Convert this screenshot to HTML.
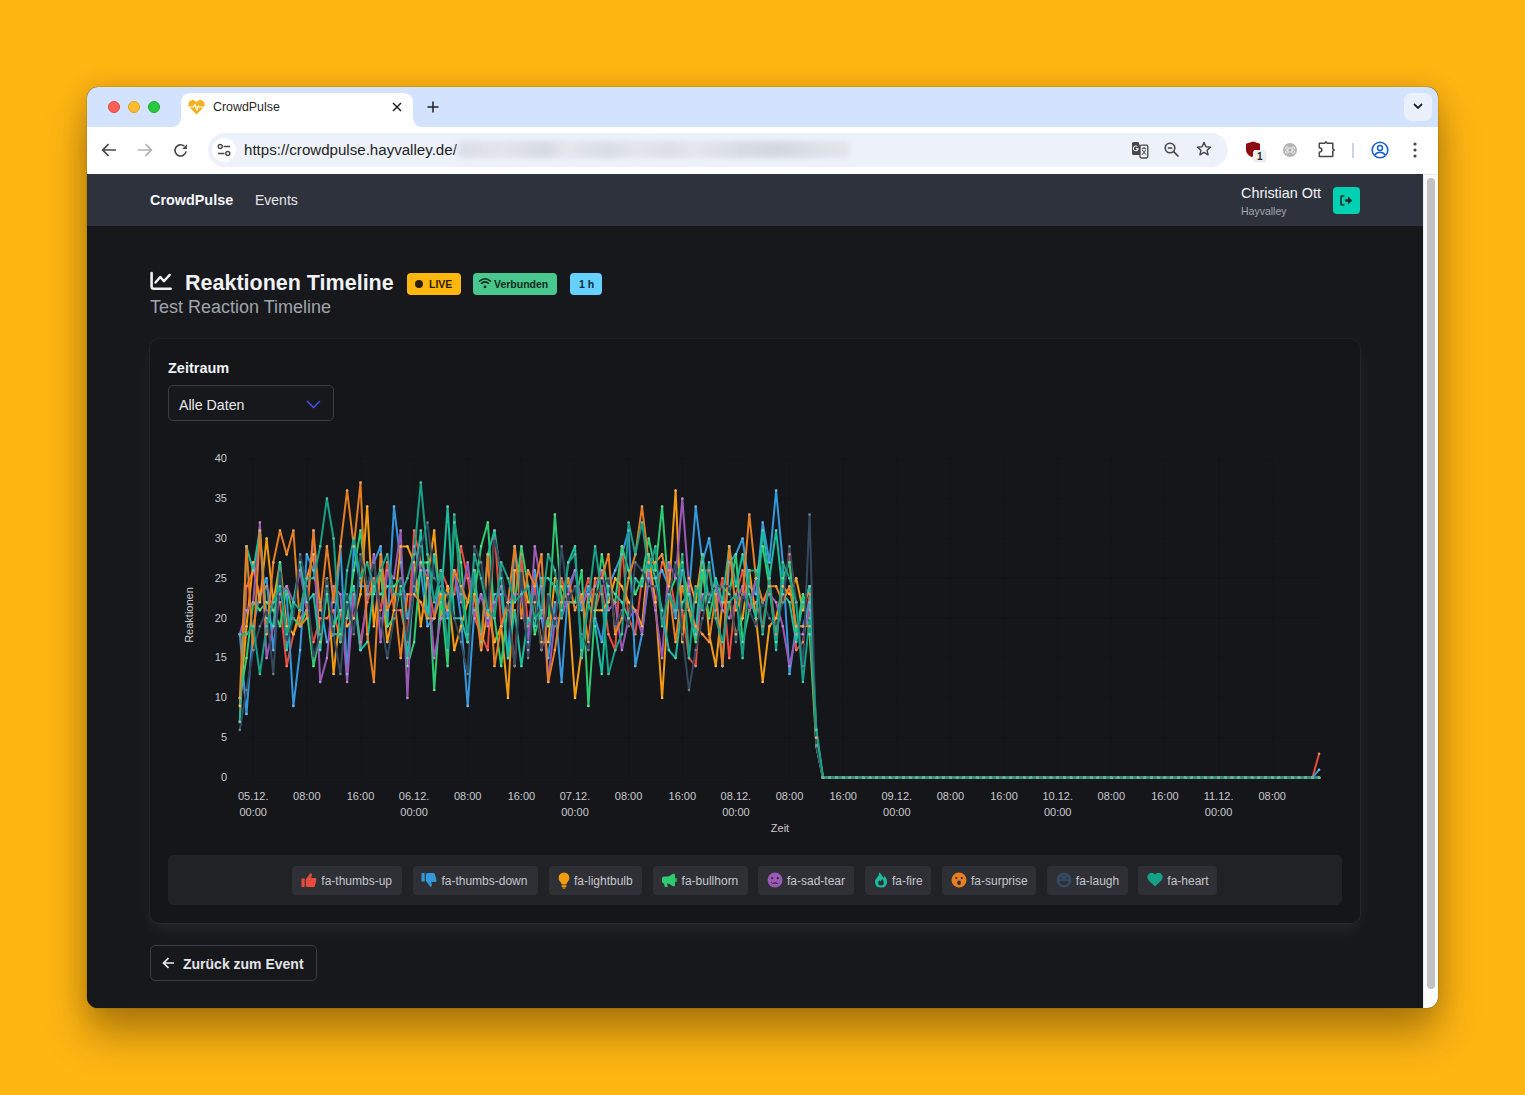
<!DOCTYPE html>
<html><head><meta charset="utf-8">
<style>
*{box-sizing:border-box;margin:0;padding:0}
html,body{width:1525px;height:1095px;overflow:hidden}
body{background:#feb613;position:relative;font-family:"Liberation Sans",sans-serif}
.abs{position:absolute}
.win{position:absolute;left:87px;top:87px;width:1351px;height:921px;border-radius:11px;overflow:hidden;background:#17181c;
 box-shadow:0 0 0 0.5px rgba(120,80,0,0.35),0 26px 40px rgba(60,35,0,0.40),0 0 24px rgba(60,35,0,0.15)}
.tabbar{position:absolute;left:0;top:0;width:1351px;height:40px;background:#d3e3fd}
.toolbar{position:absolute;left:0;top:40px;width:1351px;height:47px;background:#fff}
.page{position:absolute;left:0;top:87px;width:1336px;height:834px;background:#17181c}
.sbar{position:absolute;left:1336px;top:87px;width:15px;height:834px;background:#fafafa;border-left:1px solid #ececec;border-top:1px solid #e8e8e8}
.thumb{position:absolute;left:3px;top:3px;width:8px;height:811px;border-radius:4px;background:#c2c2c2}
.navbar{position:absolute;left:0;top:0;width:1336px;height:52px;background:#2e323c}
svg{display:block}
</style></head><body>
<div class="win">
  <div class="tabbar">
    <div class="abs" style="left:21px;top:14px;width:12px;height:12px;border-radius:50%;background:#ff5f57;border:0.5px solid #e2463f"></div>
    <div class="abs" style="left:41px;top:14px;width:12px;height:12px;border-radius:50%;background:#febc2e;border:0.5px solid #e1a116"></div>
    <div class="abs" style="left:61px;top:14px;width:12px;height:12px;border-radius:50%;background:#28c840;border:0.5px solid #14ae2a"></div>
    <!-- active tab -->
    <svg class="abs" style="left:84px;top:6px" width="252" height="34" viewBox="0 0 252 34">
      <path d="M0 34 Q10 34 10 24 L10 10 Q10 0 20 0 L232 0 Q242 0 242 10 L242 24 Q242 34 252 34 Z" fill="#fff"/>
    </svg>
    <svg class="abs" style="left:101px;top:12px" width="17" height="16" viewBox="0 0 17 16">
      <path d="M8.5 15.5 L1.6 8.6 C-0.6 6.4 0.2 1.2 4.4 1.0 C6.3 0.9 7.6 2.0 8.5 3.3 C9.4 2.0 10.7 0.9 12.6 1.0 C16.8 1.2 17.6 6.4 15.4 8.6 Z" fill="#f6b01e"/>
      <path d="M1 8 L5.5 8 L7 5.5 L8.8 11 L10.3 7 L11.3 8 L16 8" fill="none" stroke="#fff" stroke-width="1.2" stroke-linejoin="round"/>
    </svg>
    <div class="abs" style="left:126px;top:13px;font-size:12.4px;color:#1f1f1f;line-height:14px">CrowdPulse</div>
    <svg class="abs" style="left:305px;top:15px" width="10" height="10" viewBox="0 0 10 10"><path d="M1 1L9 9M9 1L1 9" stroke="#1f1f1f" stroke-width="1.5"/></svg>
    <svg class="abs" style="left:340px;top:14px" width="12" height="12" viewBox="0 0 12 12"><path d="M6 0.5V11.5M0.5 6H11.5" stroke="#1f1f1f" stroke-width="1.5"/></svg>
    <div class="abs" style="left:1317px;top:6px;width:28px;height:28px;border-radius:8px;background:#ebf1fc"></div>
    <svg class="abs" style="left:1326px;top:16px" width="10" height="7" viewBox="0 0 10 7"><path d="M1 1L5 5L9 1" fill="none" stroke="#1f1f1f" stroke-width="1.8"/></svg>
  </div>
  <div class="toolbar">
    <svg class="abs" style="left:14px;top:16px" width="16" height="14" viewBox="0 0 16 14"><path d="M15 7H2M7.5 1.2L1.7 7L7.5 12.8" fill="none" stroke="#474747" stroke-width="1.7"/></svg>
    <svg class="abs" style="left:50px;top:16px" width="16" height="14" viewBox="0 0 16 14"><path d="M1 7H14M8.5 1.2L14.3 7L8.5 12.8" fill="none" stroke="#b1b1b1" stroke-width="1.7"/></svg>
    <svg class="abs" style="left:86px;top:16px" width="16" height="16" viewBox="0 0 16 16"><path d="M13.1 8.4A5.6 5.6 0 1 1 11.3 3.2" fill="none" stroke="#474747" stroke-width="1.6"/><path d="M13.9 1.2V5.9H9.2Z" fill="#474747"/></svg>
    <div class="abs" style="left:121px;top:6px;width:1020px;height:34px;border-radius:17px;background:#edf1f9"></div>
    <div class="abs" style="left:125px;top:11px;width:24px;height:24px;border-radius:12px;background:#fff"></div>
    <svg class="abs" style="left:130px;top:16px" width="14" height="14" viewBox="0 0 14 14">
      <circle cx="3.2" cy="3.5" r="2" fill="none" stroke="#474747" stroke-width="1.4"/><path d="M6.5 3.5H13" stroke="#474747" stroke-width="1.4"/>
      <circle cx="10.8" cy="10.5" r="2" fill="none" stroke="#474747" stroke-width="1.4"/><path d="M1 10.5H7.5" stroke="#474747" stroke-width="1.4"/>
    </svg>
    <div class="abs" style="left:157px;top:14px;font-size:15.1px;color:#1f1f1f;line-height:18px">https://crowdpulse.hayvalley.de/</div>
    <div class="abs" style="left:371px;top:14px;width:392px;height:17px;border-radius:6px;background:linear-gradient(90deg,#dadee6 0%,#e2e5ec 12%,#d6dae2 22%,#e4e7ee 28%,#d9dde5 38%,#e3e6ed 46%,#dcdfe7 54%,#e4e7ee 60%,#d8dce4 72%,#d4d8e0 82%,#dde1e8 92%,#e3e6ed 100%);filter:blur(2.5px)"></div>
    <!-- right omnibox icons -->
    <svg class="abs" style="left:1044px;top:14px" width="18" height="18" viewBox="0 0 18 18">
      <path d="M1 2.5Q1 1 2.5 1H7.5L8.6 4.2H9V14H2.5Q1 14 1 12.5Z" fill="#474747"/>
      <rect x="9" y="4.2" width="7.8" height="12.8" rx="1.5" fill="#edf1f9" stroke="#474747" stroke-width="1.3"/>
      <path d="M7.2 7.4A2.4 2.4 0 1 1 6.4 5.6M4.9 7.6H7.3" fill="none" stroke="#edf1f9" stroke-width="1.1"/>
      <path d="M10.8 7.3H15.2M13 6.2V7.3M11.3 8.6Q12.6 12.5 15.3 13.5M14.6 8.6Q13.6 12.3 10.8 13.5" fill="none" stroke="#474747" stroke-width="1"/>
    </svg>
    <svg class="abs" style="left:1077px;top:55px" width="1" height="1"></svg>
    <svg class="abs" style="left:1077px;top:55px" width="1" height="1"></svg>
    <svg class="abs" style="left:1077px;top:15px" width="16" height="16" viewBox="0 0 16 16"><circle cx="6" cy="6" r="4.8" fill="none" stroke="#474747" stroke-width="1.6"/><path d="M3.8 6H8.2M9.6 9.6L14.5 14.5" stroke="#474747" stroke-width="1.7"/></svg>
    <svg class="abs" style="left:1109px;top:14px" width="16" height="16" viewBox="0 0 16 16"><path d="M8 1.4L9.9 5.7L14.6 6.1L11 9.2L12.1 13.8L8 11.4L3.9 13.8L5 9.2L1.4 6.1L6.1 5.7Z" fill="none" stroke="#474747" stroke-width="1.4" stroke-linejoin="round"/></svg>
    <svg class="abs" style="left:1159px;top:14px" width="24" height="24" viewBox="0 0 24 24"><path d="M0 2.8L7 0.6L14 2.8V9H8V14.5Q6.5 15.5 5.5 16Q0 13 0 9Z" fill="#8d0a0e"/><rect x="7" y="9" width="13.5" height="12.5" rx="3" fill="#ededed"/><text x="13.8" y="19" font-size="10" font-weight="bold" text-anchor="middle" fill="#2a2a2a" font-family="Liberation Sans">1</text></svg>
    <div class="abs" style="left:1196px;top:56px"></div>
    <svg class="abs" style="left:1196px;top:16px" width="14" height="14" viewBox="0 0 14 14"><circle cx="7" cy="7" r="7" fill="#b4b4b4"/><path d="M5 5H9V9H5ZM5 5A1.3 1.3 0 1 0 3.7 6.3H5M9 5A1.3 1.3 0 1 1 10.3 6.3H9M5 9A1.3 1.3 0 1 1 3.7 7.7H5M9 9A1.3 1.3 0 1 0 10.3 7.7H9" fill="none" stroke="#eee" stroke-width="0.9"/></svg>
    <svg class="abs" style="left:1231px;top:14px" width="18" height="18" viewBox="0 0 18 18"><path d="M1.3 2.2H6.6L7.9 0.9L9.2 2.2H14.8V7.8L16.3 9L14.8 10.2V15.6H1.3V11.2Q3.9 10.8 3.9 9Q3.9 7.2 1.3 6.8Z" fill="none" stroke="#474747" stroke-width="1.5" stroke-linejoin="round"/></svg>
    <div class="abs" style="left:1265px;top:16px;width:2px;height:15px;background:#c9d5ea"></div>
    <svg class="abs" style="left:1284px;top:14px" width="18" height="18" viewBox="0 0 18 18"><circle cx="9" cy="9" r="7.8" fill="none" stroke="#1b5fcf" stroke-width="1.6"/><circle cx="9" cy="7" r="2.5" fill="none" stroke="#1b5fcf" stroke-width="1.5"/><path d="M3.8 14.2Q5.5 11.3 9 11.3Q12.5 11.3 14.2 14.2" fill="none" stroke="#1b5fcf" stroke-width="1.5"/></svg>
    <svg class="abs" style="left:1326px;top:15px" width="4" height="16" viewBox="0 0 4 16"><circle cx="2" cy="2" r="1.6" fill="#474747"/><circle cx="2" cy="8" r="1.6" fill="#474747"/><circle cx="2" cy="14" r="1.6" fill="#474747"/></svg>
  </div>
  <div class="page">
    <div class="navbar">
      <div class="abs" style="left:63px;top:18px;font-size:14.4px;font-weight:bold;color:#f4f5f7;line-height:16px">CrowdPulse</div>
      <div class="abs" style="left:168px;top:18px;font-size:14px;color:#e4e6ea;line-height:16px">Events</div>
      <div class="abs" style="left:1154px;top:11px;font-size:14.4px;color:#f2f3f5;line-height:16px">Christian Ott</div>
      <div class="abs" style="left:1154px;top:31px;font-size:10.5px;color:#a3a7af;line-height:12px">Hayvalley</div>
      <div class="abs" style="left:1246px;top:13px;width:27px;height:27px;border-radius:4px;background:#00d1b2"></div>
      <svg class="abs" style="left:1253px;top:21px" width="13" height="11" viewBox="0 0 13 11"><path d="M4.5 1H2Q1 1 1 2V9Q1 10 2 10H4.5" fill="none" stroke="#10302a" stroke-width="1.6"/><path d="M5 4.2H8V1.5L12.3 5.5L8 9.5V6.8H5Z" fill="#10302a"/></svg>
    </div>
  </div>
  <div class="sbar"><div class="thumb"></div></div>
</div>

<!-- page content in absolute body coords -->
<svg class="abs" style="left:150px;top:270px" width="24" height="22" viewBox="0 0 24 22"><path d="M1.6 3V16.6Q1.6 18.8 3.8 18.8H20.7" fill="none" stroke="#eef0f3" stroke-width="2.6" stroke-linecap="round"/><path d="M5.5 12.5L10.3 7L13.9 11.2L19.7 4.9" fill="none" stroke="#eef0f3" stroke-width="2.4" stroke-linecap="round" stroke-linejoin="round"/></svg>
<div class="abs" style="left:185px;top:271px;font-size:21.5px;font-weight:bold;color:#f0f1f4;line-height:24px">Reaktionen Timeline</div>
<div class="abs" style="left:407px;top:273px;width:54px;height:22px;border-radius:4px;background:#ffb70f"></div>
<div class="abs" style="left:415px;top:280px;width:8px;height:8px;border-radius:50%;background:#2a1f05"></div>
<div class="abs" style="left:429px;top:278px;font-size:10.5px;font-weight:bold;color:#2a1f05;line-height:12px">LIVE</div>
<div class="abs" style="left:473px;top:273px;width:84px;height:22px;border-radius:4px;background:#48c78e"></div>
<svg class="abs" style="left:478px;top:277px" width="14" height="12" viewBox="0 0 14 12"><path d="M1 4.5Q7 -1 13 4.5M3 6.8Q7 3 11 6.8" fill="none" stroke="#0d2a1c" stroke-width="1.5"/><circle cx="7" cy="9.8" r="1.4" fill="#0d2a1c"/></svg>
<div class="abs" style="left:494px;top:278px;font-size:10.5px;font-weight:bold;color:#0d2a1c;line-height:12px">Verbunden</div>
<div class="abs" style="left:570px;top:273px;width:32px;height:22px;border-radius:4px;background:#66d1ff"></div>
<div class="abs" style="left:579px;top:278px;font-size:10.5px;font-weight:bold;color:#0a2a3a;line-height:12px">1 h</div>
<div class="abs" style="left:150px;top:297px;font-size:18px;color:#a0a4ab;line-height:20px">Test Reaction Timeline</div>

<!-- card -->
<div class="abs" style="left:150px;top:339px;width:1210px;height:584px;border-radius:9px;background:#15161a;box-shadow:0 0 0 1px rgba(255,255,255,0.04),0 8px 16px -2px rgba(255,255,255,0.07)"></div>
<div class="abs" style="left:168px;top:360px;font-size:14.5px;font-weight:bold;color:#f0f1f4;line-height:16px">Zeitraum</div>
<div class="abs" style="left:168px;top:385px;width:166px;height:36px;border-radius:5px;border:1px solid #3a3d45;background:#17181c"></div>
<div class="abs" style="left:179px;top:397px;font-size:14.2px;color:#e8e9ec;line-height:16px">Alle Daten</div>
<svg class="abs" style="left:306px;top:400px" width="15" height="9" viewBox="0 0 15 9"><path d="M1 1L7.5 7.5L14 1" fill="none" stroke="#4258ff" stroke-width="1.3"/></svg>

<svg class="abs" style="left:0;top:0" width="1525" height="1095" viewBox="0 0 1525 1095">
<g stroke="rgba(0,0,0,0.07)" stroke-width="1"><line x1="238" y1="777.7" x2="1320" y2="777.7"/><line x1="238" y1="737.8" x2="1320" y2="737.8"/><line x1="238" y1="698.0" x2="1320" y2="698.0"/><line x1="238" y1="658.1" x2="1320" y2="658.1"/><line x1="238" y1="618.2" x2="1320" y2="618.2"/><line x1="238" y1="578.3" x2="1320" y2="578.3"/><line x1="238" y1="538.5" x2="1320" y2="538.5"/><line x1="238" y1="498.6" x2="1320" y2="498.6"/><line x1="238" y1="458.7" x2="1320" y2="458.7"/><line x1="253.2" y1="458" x2="253.2" y2="777"/><line x1="306.8" y1="458" x2="306.8" y2="777"/><line x1="360.5" y1="458" x2="360.5" y2="777"/><line x1="414.1" y1="458" x2="414.1" y2="777"/><line x1="467.7" y1="458" x2="467.7" y2="777"/><line x1="521.4" y1="458" x2="521.4" y2="777"/><line x1="575.0" y1="458" x2="575.0" y2="777"/><line x1="628.6" y1="458" x2="628.6" y2="777"/><line x1="682.3" y1="458" x2="682.3" y2="777"/><line x1="735.9" y1="458" x2="735.9" y2="777"/><line x1="789.5" y1="458" x2="789.5" y2="777"/><line x1="843.2" y1="458" x2="843.2" y2="777"/><line x1="896.8" y1="458" x2="896.8" y2="777"/><line x1="950.4" y1="458" x2="950.4" y2="777"/><line x1="1004.0" y1="458" x2="1004.0" y2="777"/><line x1="1057.7" y1="458" x2="1057.7" y2="777"/><line x1="1111.3" y1="458" x2="1111.3" y2="777"/><line x1="1164.9" y1="458" x2="1164.9" y2="777"/><line x1="1218.6" y1="458" x2="1218.6" y2="777"/><line x1="1272.2" y1="458" x2="1272.2" y2="777"/></g>
<polyline fill="none" stroke="#e74c3c" stroke-width="2" stroke-linejoin="round" points="239.8,721.9 246.5,586.3 253.2,570.4 259.9,594.3 266.6,586.3 273.3,610.2 280.0,602.2 286.7,666.1 293.4,634.2 300.1,618.2 306.8,610.2 313.5,642.1 320.2,618.2 326.9,618.2 333.6,610.2 340.4,642.1 347.1,618.2 353.8,594.3 360.5,642.1 367.2,602.2 373.9,578.3 380.6,610.2 387.3,562.4 394.0,610.2 400.7,610.2 407.4,642.1 414.1,530.5 420.8,562.4 427.5,578.3 434.2,618.2 440.9,570.4 447.6,586.3 454.3,594.3 461.0,546.4 467.7,578.3 474.4,618.2 481.1,634.2 487.8,650.1 494.5,530.5 501.2,626.2 508.0,602.2 514.7,666.1 521.4,554.4 528.1,626.2 534.8,586.3 541.5,650.1 548.2,618.2 554.9,618.2 561.6,578.3 568.3,602.2 575.0,602.2 581.7,602.2 588.4,578.3 595.1,610.2 601.8,586.3 608.5,634.2 615.2,650.1 621.9,546.4 628.6,618.2 635.3,634.2 642.0,578.3 648.7,562.4 655.4,602.2 662.1,562.4 668.8,570.4 675.6,610.2 682.3,610.2 689.0,658.1 695.7,666.1 702.4,570.4 709.1,570.4 715.8,610.2 722.5,578.3 729.2,658.1 735.9,594.3 742.6,570.4 749.3,610.2 756.0,602.2 762.7,626.2 769.4,578.3 776.1,634.2 782.8,594.3 789.5,554.4 796.2,650.1 802.9,642.1 809.6,594.3 816.3,737.8 823.0,777.7 829.7,777.7 836.4,777.7 843.2,777.7 849.9,777.7 856.6,777.7 863.3,777.7 870.0,777.7 876.7,777.7 883.4,777.7 890.1,777.7 896.8,777.7 903.5,777.7 910.2,777.7 916.9,777.7 923.6,777.7 930.3,777.7 937.0,777.7 943.7,777.7 950.4,777.7 957.1,777.7 963.8,777.7 970.5,777.7 977.2,777.7 983.9,777.7 990.6,777.7 997.3,777.7 1004.0,777.7 1010.8,777.7 1017.5,777.7 1024.2,777.7 1030.9,777.7 1037.6,777.7 1044.3,777.7 1051.0,777.7 1057.7,777.7 1064.4,777.7 1071.1,777.7 1077.8,777.7 1084.5,777.7 1091.2,777.7 1097.9,777.7 1104.6,777.7 1111.3,777.7 1118.0,777.7 1124.7,777.7 1131.4,777.7 1138.1,777.7 1144.8,777.7 1151.5,777.7 1158.2,777.7 1164.9,777.7 1171.6,777.7 1178.4,777.7 1185.1,777.7 1191.8,777.7 1198.5,777.7 1205.2,777.7 1211.9,777.7 1218.6,777.7 1225.3,777.7 1232.0,777.7 1238.7,777.7 1245.4,777.7 1252.1,777.7 1258.8,777.7 1265.5,777.7 1272.2,777.7 1278.9,777.7 1285.6,777.7 1292.3,777.7 1299.0,777.7 1305.7,777.7 1312.4,777.7 1319.1,753.8"/>
<polyline fill="none" stroke="#3498db" stroke-width="2" stroke-linejoin="round" points="239.8,634.2 246.5,713.9 253.2,626.2 259.9,594.3 266.6,578.3 273.3,650.1 280.0,586.3 286.7,594.3 293.4,705.9 300.1,650.1 306.8,554.4 313.5,570.4 320.2,602.2 326.9,642.1 333.6,634.2 340.4,546.4 347.1,674.0 353.8,546.4 360.5,586.3 367.2,586.3 373.9,562.4 380.6,546.4 387.3,626.2 394.0,506.6 400.7,562.4 407.4,618.2 414.1,594.3 420.8,570.4 427.5,626.2 434.2,618.2 440.9,570.4 447.6,618.2 454.3,570.4 461.0,618.2 467.7,705.9 474.4,610.2 481.1,594.3 487.8,618.2 494.5,594.3 501.2,594.3 508.0,658.1 514.7,546.4 521.4,594.3 528.1,642.1 534.8,570.4 541.5,618.2 548.2,658.1 554.9,602.2 561.6,682.0 568.3,586.3 575.0,570.4 581.7,610.2 588.4,586.3 595.1,618.2 601.8,642.1 608.5,586.3 615.2,570.4 621.9,554.4 628.6,530.5 635.3,666.1 642.0,634.2 648.7,578.3 655.4,578.3 662.1,570.4 668.8,586.3 675.6,618.2 682.3,570.4 689.0,594.3 695.7,506.6 702.4,562.4 709.1,538.5 715.8,586.3 722.5,666.1 729.2,562.4 735.9,554.4 742.6,538.5 749.3,586.3 756.0,594.3 762.7,522.5 769.4,562.4 776.1,490.6 782.8,562.4 789.5,674.0 796.2,626.2 802.9,626.2 809.6,602.2 816.3,745.8 823.0,777.7 829.7,777.7 836.4,777.7 843.2,777.7 849.9,777.7 856.6,777.7 863.3,777.7 870.0,777.7 876.7,777.7 883.4,777.7 890.1,777.7 896.8,777.7 903.5,777.7 910.2,777.7 916.9,777.7 923.6,777.7 930.3,777.7 937.0,777.7 943.7,777.7 950.4,777.7 957.1,777.7 963.8,777.7 970.5,777.7 977.2,777.7 983.9,777.7 990.6,777.7 997.3,777.7 1004.0,777.7 1010.8,777.7 1017.5,777.7 1024.2,777.7 1030.9,777.7 1037.6,777.7 1044.3,777.7 1051.0,777.7 1057.7,777.7 1064.4,777.7 1071.1,777.7 1077.8,777.7 1084.5,777.7 1091.2,777.7 1097.9,777.7 1104.6,777.7 1111.3,777.7 1118.0,777.7 1124.7,777.7 1131.4,777.7 1138.1,777.7 1144.8,777.7 1151.5,777.7 1158.2,777.7 1164.9,777.7 1171.6,777.7 1178.4,777.7 1185.1,777.7 1191.8,777.7 1198.5,777.7 1205.2,777.7 1211.9,777.7 1218.6,777.7 1225.3,777.7 1232.0,777.7 1238.7,777.7 1245.4,777.7 1252.1,777.7 1258.8,777.7 1265.5,777.7 1272.2,777.7 1278.9,777.7 1285.6,777.7 1292.3,777.7 1299.0,777.7 1305.7,777.7 1312.4,777.7 1319.1,769.7"/>
<polyline fill="none" stroke="#f39c12" stroke-width="2" stroke-linejoin="round" points="239.8,705.9 246.5,626.2 253.2,562.4 259.9,602.2 266.6,538.5 273.3,602.2 280.0,562.4 286.7,626.2 293.4,634.2 300.1,610.2 306.8,578.3 313.5,554.4 320.2,642.1 326.9,578.3 333.6,674.0 340.4,610.2 347.1,626.2 353.8,618.2 360.5,594.3 367.2,506.6 373.9,626.2 380.6,570.4 387.3,642.1 394.0,610.2 400.7,546.4 407.4,546.4 414.1,562.4 420.8,626.2 427.5,578.3 434.2,530.5 440.9,618.2 447.6,586.3 454.3,650.1 461.0,626.2 467.7,602.2 474.4,570.4 481.1,650.1 487.8,610.2 494.5,642.1 501.2,626.2 508.0,698.0 514.7,570.4 521.4,570.4 528.1,602.2 534.8,602.2 541.5,642.1 548.2,642.1 554.9,578.3 561.6,586.3 568.3,602.2 575.0,698.0 581.7,650.1 588.4,594.3 595.1,610.2 601.8,610.2 608.5,602.2 615.2,578.3 621.9,586.3 628.6,602.2 635.3,610.2 642.0,626.2 648.7,554.4 655.4,602.2 662.1,698.0 668.8,594.3 675.6,490.6 682.3,642.1 689.0,578.3 695.7,602.2 702.4,554.4 709.1,634.2 715.8,666.1 722.5,602.2 729.2,602.2 735.9,634.2 742.6,618.2 749.3,570.4 756.0,618.2 762.7,682.0 769.4,626.2 776.1,618.2 782.8,586.3 789.5,594.3 796.2,578.3 802.9,610.2 809.6,586.3 816.3,745.8 823.0,777.7 829.7,777.7 836.4,777.7 843.2,777.7 849.9,777.7 856.6,777.7 863.3,777.7 870.0,777.7 876.7,777.7 883.4,777.7 890.1,777.7 896.8,777.7 903.5,777.7 910.2,777.7 916.9,777.7 923.6,777.7 930.3,777.7 937.0,777.7 943.7,777.7 950.4,777.7 957.1,777.7 963.8,777.7 970.5,777.7 977.2,777.7 983.9,777.7 990.6,777.7 997.3,777.7 1004.0,777.7 1010.8,777.7 1017.5,777.7 1024.2,777.7 1030.9,777.7 1037.6,777.7 1044.3,777.7 1051.0,777.7 1057.7,777.7 1064.4,777.7 1071.1,777.7 1077.8,777.7 1084.5,777.7 1091.2,777.7 1097.9,777.7 1104.6,777.7 1111.3,777.7 1118.0,777.7 1124.7,777.7 1131.4,777.7 1138.1,777.7 1144.8,777.7 1151.5,777.7 1158.2,777.7 1164.9,777.7 1171.6,777.7 1178.4,777.7 1185.1,777.7 1191.8,777.7 1198.5,777.7 1205.2,777.7 1211.9,777.7 1218.6,777.7 1225.3,777.7 1232.0,777.7 1238.7,777.7 1245.4,777.7 1252.1,777.7 1258.8,777.7 1265.5,777.7 1272.2,777.7 1278.9,777.7 1285.6,777.7 1292.3,777.7 1299.0,777.7 1305.7,777.7 1312.4,777.7 1319.1,777.7"/>
<polyline fill="none" stroke="#2ecc71" stroke-width="2" stroke-linejoin="round" points="239.8,698.0 246.5,658.1 253.2,602.2 259.9,610.2 266.6,602.2 273.3,610.2 280.0,626.2 286.7,586.3 293.4,618.2 300.1,626.2 306.8,610.2 313.5,666.1 320.2,634.2 326.9,594.3 333.6,626.2 340.4,610.2 347.1,618.2 353.8,570.4 360.5,530.5 367.2,594.3 373.9,594.3 380.6,570.4 387.3,626.2 394.0,618.2 400.7,586.3 407.4,666.1 414.1,642.1 420.8,562.4 427.5,562.4 434.2,690.0 440.9,594.3 447.6,666.1 454.3,522.5 461.0,562.4 467.7,642.1 474.4,594.3 481.1,546.4 487.8,522.5 494.5,618.2 501.2,666.1 508.0,602.2 514.7,602.2 521.4,546.4 528.1,586.3 534.8,634.2 541.5,610.2 548.2,626.2 554.9,514.5 561.6,602.2 568.3,602.2 575.0,602.2 581.7,570.4 588.4,705.9 595.1,610.2 601.8,554.4 608.5,594.3 615.2,602.2 621.9,546.4 628.6,570.4 635.3,594.3 642.0,578.3 648.7,538.5 655.4,570.4 662.1,506.6 668.8,594.3 675.6,578.3 682.3,562.4 689.0,610.2 695.7,642.1 702.4,570.4 709.1,618.2 715.8,586.3 722.5,586.3 729.2,594.3 735.9,554.4 742.6,642.1 749.3,610.2 756.0,578.3 762.7,546.4 769.4,586.3 776.1,642.1 782.8,578.3 789.5,562.4 796.2,634.2 802.9,594.3 809.6,634.2 816.3,745.8 823.0,777.7 829.7,777.7 836.4,777.7 843.2,777.7 849.9,777.7 856.6,777.7 863.3,777.7 870.0,777.7 876.7,777.7 883.4,777.7 890.1,777.7 896.8,777.7 903.5,777.7 910.2,777.7 916.9,777.7 923.6,777.7 930.3,777.7 937.0,777.7 943.7,777.7 950.4,777.7 957.1,777.7 963.8,777.7 970.5,777.7 977.2,777.7 983.9,777.7 990.6,777.7 997.3,777.7 1004.0,777.7 1010.8,777.7 1017.5,777.7 1024.2,777.7 1030.9,777.7 1037.6,777.7 1044.3,777.7 1051.0,777.7 1057.7,777.7 1064.4,777.7 1071.1,777.7 1077.8,777.7 1084.5,777.7 1091.2,777.7 1097.9,777.7 1104.6,777.7 1111.3,777.7 1118.0,777.7 1124.7,777.7 1131.4,777.7 1138.1,777.7 1144.8,777.7 1151.5,777.7 1158.2,777.7 1164.9,777.7 1171.6,777.7 1178.4,777.7 1185.1,777.7 1191.8,777.7 1198.5,777.7 1205.2,777.7 1211.9,777.7 1218.6,777.7 1225.3,777.7 1232.0,777.7 1238.7,777.7 1245.4,777.7 1252.1,777.7 1258.8,777.7 1265.5,777.7 1272.2,777.7 1278.9,777.7 1285.6,777.7 1292.3,777.7 1299.0,777.7 1305.7,777.7 1312.4,777.7 1319.1,777.7"/>
<polyline fill="none" stroke="#9b59b6" stroke-width="2" stroke-linejoin="round" points="239.8,634.2 246.5,610.2 253.2,602.2 259.9,522.5 266.6,658.1 273.3,626.2 280.0,594.3 286.7,586.3 293.4,602.2 300.1,570.4 306.8,610.2 313.5,530.5 320.2,682.0 326.9,658.1 333.6,586.3 340.4,594.3 347.1,682.0 353.8,594.3 360.5,650.1 367.2,594.3 373.9,554.4 380.6,642.1 387.3,570.4 394.0,578.3 400.7,530.5 407.4,698.0 414.1,546.4 420.8,570.4 427.5,570.4 434.2,658.1 440.9,618.2 447.6,610.2 454.3,570.4 461.0,602.2 467.7,562.4 474.4,618.2 481.1,594.3 487.8,626.2 494.5,602.2 501.2,586.3 508.0,602.2 514.7,594.3 521.4,594.3 528.1,650.1 534.8,546.4 541.5,586.3 548.2,682.0 554.9,618.2 561.6,618.2 568.3,594.3 575.0,570.4 581.7,602.2 588.4,594.3 595.1,586.3 601.8,570.4 608.5,610.2 615.2,602.2 621.9,650.1 628.6,618.2 635.3,610.2 642.0,634.2 648.7,570.4 655.4,610.2 662.1,658.1 668.8,562.4 675.6,578.3 682.3,498.6 689.0,586.3 695.7,634.2 702.4,594.3 709.1,594.3 715.8,586.3 722.5,610.2 729.2,618.2 735.9,602.2 742.6,586.3 749.3,610.2 756.0,578.3 762.7,602.2 769.4,594.3 776.1,602.2 782.8,626.2 789.5,666.1 796.2,634.2 802.9,634.2 809.6,610.2 816.3,737.8 823.0,777.7 829.7,777.7 836.4,777.7 843.2,777.7 849.9,777.7 856.6,777.7 863.3,777.7 870.0,777.7 876.7,777.7 883.4,777.7 890.1,777.7 896.8,777.7 903.5,777.7 910.2,777.7 916.9,777.7 923.6,777.7 930.3,777.7 937.0,777.7 943.7,777.7 950.4,777.7 957.1,777.7 963.8,777.7 970.5,777.7 977.2,777.7 983.9,777.7 990.6,777.7 997.3,777.7 1004.0,777.7 1010.8,777.7 1017.5,777.7 1024.2,777.7 1030.9,777.7 1037.6,777.7 1044.3,777.7 1051.0,777.7 1057.7,777.7 1064.4,777.7 1071.1,777.7 1077.8,777.7 1084.5,777.7 1091.2,777.7 1097.9,777.7 1104.6,777.7 1111.3,777.7 1118.0,777.7 1124.7,777.7 1131.4,777.7 1138.1,777.7 1144.8,777.7 1151.5,777.7 1158.2,777.7 1164.9,777.7 1171.6,777.7 1178.4,777.7 1185.1,777.7 1191.8,777.7 1198.5,777.7 1205.2,777.7 1211.9,777.7 1218.6,777.7 1225.3,777.7 1232.0,777.7 1238.7,777.7 1245.4,777.7 1252.1,777.7 1258.8,777.7 1265.5,777.7 1272.2,777.7 1278.9,777.7 1285.6,777.7 1292.3,777.7 1299.0,777.7 1305.7,777.7 1312.4,777.7 1319.1,777.7"/>
<polyline fill="none" stroke="#1abc9c" stroke-width="2" stroke-linejoin="round" points="239.8,721.9 246.5,546.4 253.2,570.4 259.9,530.5 266.6,618.2 273.3,626.2 280.0,562.4 286.7,650.1 293.4,602.2 300.1,562.4 306.8,602.2 313.5,594.3 320.2,650.1 326.9,586.3 333.6,634.2 340.4,634.2 347.1,602.2 353.8,586.3 360.5,650.1 367.2,642.1 373.9,586.3 380.6,594.3 387.3,586.3 394.0,586.3 400.7,578.3 407.4,658.1 414.1,586.3 420.8,530.5 427.5,618.2 434.2,554.4 440.9,602.2 447.6,506.6 454.3,618.2 461.0,618.2 467.7,642.1 474.4,570.4 481.1,642.1 487.8,554.4 494.5,530.5 501.2,578.3 508.0,658.1 514.7,610.2 521.4,666.1 528.1,618.2 534.8,626.2 541.5,578.3 548.2,578.3 554.9,586.3 561.6,610.2 568.3,562.4 575.0,546.4 581.7,658.1 588.4,602.2 595.1,626.2 601.8,674.0 608.5,586.3 615.2,594.3 621.9,602.2 628.6,618.2 635.3,578.3 642.0,586.3 648.7,554.4 655.4,578.3 662.1,610.2 668.8,650.1 675.6,658.1 682.3,602.2 689.0,594.3 695.7,634.2 702.4,554.4 709.1,602.2 715.8,578.3 722.5,602.2 729.2,546.4 735.9,586.3 742.6,554.4 749.3,594.3 756.0,618.2 762.7,530.5 769.4,578.3 776.1,530.5 782.8,594.3 789.5,602.2 796.2,642.1 802.9,602.2 809.6,586.3 816.3,729.9 823.0,777.7 829.7,777.7 836.4,777.7 843.2,777.7 849.9,777.7 856.6,777.7 863.3,777.7 870.0,777.7 876.7,777.7 883.4,777.7 890.1,777.7 896.8,777.7 903.5,777.7 910.2,777.7 916.9,777.7 923.6,777.7 930.3,777.7 937.0,777.7 943.7,777.7 950.4,777.7 957.1,777.7 963.8,777.7 970.5,777.7 977.2,777.7 983.9,777.7 990.6,777.7 997.3,777.7 1004.0,777.7 1010.8,777.7 1017.5,777.7 1024.2,777.7 1030.9,777.7 1037.6,777.7 1044.3,777.7 1051.0,777.7 1057.7,777.7 1064.4,777.7 1071.1,777.7 1077.8,777.7 1084.5,777.7 1091.2,777.7 1097.9,777.7 1104.6,777.7 1111.3,777.7 1118.0,777.7 1124.7,777.7 1131.4,777.7 1138.1,777.7 1144.8,777.7 1151.5,777.7 1158.2,777.7 1164.9,777.7 1171.6,777.7 1178.4,777.7 1185.1,777.7 1191.8,777.7 1198.5,777.7 1205.2,777.7 1211.9,777.7 1218.6,777.7 1225.3,777.7 1232.0,777.7 1238.7,777.7 1245.4,777.7 1252.1,777.7 1258.8,777.7 1265.5,777.7 1272.2,777.7 1278.9,777.7 1285.6,777.7 1292.3,777.7 1299.0,777.7 1305.7,777.7 1312.4,777.7 1319.1,777.7"/>
<polyline fill="none" stroke="#e67e22" stroke-width="2" stroke-linejoin="round" points="239.8,698.0 246.5,546.4 253.2,650.1 259.9,530.5 266.6,634.2 273.3,562.4 280.0,530.5 286.7,554.4 293.4,530.5 300.1,626.2 306.8,618.2 313.5,530.5 320.2,610.2 326.9,546.4 333.6,602.2 340.4,546.4 347.1,490.6 353.8,546.4 360.5,482.6 367.2,634.2 373.9,682.0 380.6,554.4 387.3,610.2 394.0,594.3 400.7,658.1 407.4,594.3 414.1,594.3 420.8,602.2 427.5,618.2 434.2,618.2 440.9,594.3 447.6,610.2 454.3,570.4 461.0,586.3 467.7,602.2 474.4,594.3 481.1,650.1 487.8,554.4 494.5,666.1 501.2,626.2 508.0,602.2 514.7,546.4 521.4,618.2 528.1,570.4 534.8,586.3 541.5,554.4 548.2,682.0 554.9,650.1 561.6,602.2 568.3,578.3 575.0,610.2 581.7,594.3 588.4,642.1 595.1,578.3 601.8,578.3 608.5,554.4 615.2,634.2 621.9,618.2 628.6,578.3 635.3,554.4 642.0,506.6 648.7,562.4 655.4,562.4 662.1,554.4 668.8,586.3 675.6,642.1 682.3,586.3 689.0,610.2 695.7,626.2 702.4,634.2 709.1,642.1 715.8,594.3 722.5,666.1 729.2,546.4 735.9,610.2 742.6,594.3 749.3,514.5 756.0,578.3 762.7,602.2 769.4,586.3 776.1,586.3 782.8,602.2 789.5,586.3 796.2,626.2 802.9,626.2 809.6,626.2 816.3,737.8 823.0,777.7 829.7,777.7 836.4,777.7 843.2,777.7 849.9,777.7 856.6,777.7 863.3,777.7 870.0,777.7 876.7,777.7 883.4,777.7 890.1,777.7 896.8,777.7 903.5,777.7 910.2,777.7 916.9,777.7 923.6,777.7 930.3,777.7 937.0,777.7 943.7,777.7 950.4,777.7 957.1,777.7 963.8,777.7 970.5,777.7 977.2,777.7 983.9,777.7 990.6,777.7 997.3,777.7 1004.0,777.7 1010.8,777.7 1017.5,777.7 1024.2,777.7 1030.9,777.7 1037.6,777.7 1044.3,777.7 1051.0,777.7 1057.7,777.7 1064.4,777.7 1071.1,777.7 1077.8,777.7 1084.5,777.7 1091.2,777.7 1097.9,777.7 1104.6,777.7 1111.3,777.7 1118.0,777.7 1124.7,777.7 1131.4,777.7 1138.1,777.7 1144.8,777.7 1151.5,777.7 1158.2,777.7 1164.9,777.7 1171.6,777.7 1178.4,777.7 1185.1,777.7 1191.8,777.7 1198.5,777.7 1205.2,777.7 1211.9,777.7 1218.6,777.7 1225.3,777.7 1232.0,777.7 1238.7,777.7 1245.4,777.7 1252.1,777.7 1258.8,777.7 1265.5,777.7 1272.2,777.7 1278.9,777.7 1285.6,777.7 1292.3,777.7 1299.0,777.7 1305.7,777.7 1312.4,777.7 1319.1,777.7"/>
<polyline fill="none" stroke="#34495e" stroke-width="2" stroke-linejoin="round" points="239.8,729.9 246.5,690.0 253.2,650.1 259.9,626.2 266.6,610.2 273.3,674.0 280.0,570.4 286.7,642.1 293.4,618.2 300.1,554.4 306.8,586.3 313.5,658.1 320.2,634.2 326.9,578.3 333.6,634.2 340.4,674.0 347.1,594.3 353.8,634.2 360.5,554.4 367.2,586.3 373.9,562.4 380.6,618.2 387.3,658.1 394.0,618.2 400.7,578.3 407.4,642.1 414.1,586.3 420.8,546.4 427.5,522.5 434.2,578.3 440.9,586.3 447.6,594.3 454.3,618.2 461.0,642.1 467.7,674.0 474.4,546.4 481.1,562.4 487.8,610.2 494.5,538.5 501.2,570.4 508.0,610.2 514.7,666.1 521.4,570.4 528.1,658.1 534.8,594.3 541.5,650.1 548.2,594.3 554.9,626.2 561.6,546.4 568.3,602.2 575.0,586.3 581.7,634.2 588.4,650.1 595.1,594.3 601.8,586.3 608.5,578.3 615.2,626.2 621.9,610.2 628.6,626.2 635.3,562.4 642.0,570.4 648.7,586.3 655.4,586.3 662.1,618.2 668.8,594.3 675.6,562.4 682.3,634.2 689.0,690.0 695.7,650.1 702.4,618.2 709.1,594.3 715.8,586.3 722.5,586.3 729.2,586.3 735.9,642.1 742.6,594.3 749.3,610.2 756.0,626.2 762.7,602.2 769.4,618.2 776.1,626.2 782.8,602.2 789.5,546.4 796.2,602.2 802.9,666.1 809.6,514.5 816.3,745.8 823.0,777.7 829.7,777.7 836.4,777.7 843.2,777.7 849.9,777.7 856.6,777.7 863.3,777.7 870.0,777.7 876.7,777.7 883.4,777.7 890.1,777.7 896.8,777.7 903.5,777.7 910.2,777.7 916.9,777.7 923.6,777.7 930.3,777.7 937.0,777.7 943.7,777.7 950.4,777.7 957.1,777.7 963.8,777.7 970.5,777.7 977.2,777.7 983.9,777.7 990.6,777.7 997.3,777.7 1004.0,777.7 1010.8,777.7 1017.5,777.7 1024.2,777.7 1030.9,777.7 1037.6,777.7 1044.3,777.7 1051.0,777.7 1057.7,777.7 1064.4,777.7 1071.1,777.7 1077.8,777.7 1084.5,777.7 1091.2,777.7 1097.9,777.7 1104.6,777.7 1111.3,777.7 1118.0,777.7 1124.7,777.7 1131.4,777.7 1138.1,777.7 1144.8,777.7 1151.5,777.7 1158.2,777.7 1164.9,777.7 1171.6,777.7 1178.4,777.7 1185.1,777.7 1191.8,777.7 1198.5,777.7 1205.2,777.7 1211.9,777.7 1218.6,777.7 1225.3,777.7 1232.0,777.7 1238.7,777.7 1245.4,777.7 1252.1,777.7 1258.8,777.7 1265.5,777.7 1272.2,777.7 1278.9,777.7 1285.6,777.7 1292.3,777.7 1299.0,777.7 1305.7,777.7 1312.4,777.7 1319.1,777.7"/>
<polyline fill="none" stroke="#16a085" stroke-width="2" stroke-linejoin="round" points="239.8,634.2 246.5,634.2 253.2,626.2 259.9,674.0 266.6,626.2 273.3,602.2 280.0,586.3 286.7,634.2 293.4,602.2 300.1,610.2 306.8,578.3 313.5,578.3 320.2,546.4 326.9,498.6 333.6,538.5 340.4,642.1 347.1,570.4 353.8,538.5 360.5,578.3 367.2,562.4 373.9,586.3 380.6,570.4 387.3,554.4 394.0,594.3 400.7,594.3 407.4,578.3 414.1,554.4 420.8,482.6 427.5,554.4 434.2,602.2 440.9,570.4 447.6,650.1 454.3,514.5 461.0,594.3 467.7,634.2 474.4,554.4 481.1,578.3 487.8,610.2 494.5,618.2 501.2,562.4 508.0,578.3 514.7,602.2 521.4,594.3 528.1,586.3 534.8,618.2 541.5,610.2 548.2,554.4 554.9,570.4 561.6,618.2 568.3,562.4 575.0,554.4 581.7,650.1 588.4,602.2 595.1,546.4 601.8,594.3 608.5,674.0 615.2,650.1 621.9,634.2 628.6,522.5 635.3,554.4 642.0,522.5 648.7,570.4 655.4,546.4 662.1,626.2 668.8,594.3 675.6,610.2 682.3,554.4 689.0,658.1 695.7,586.3 702.4,610.2 709.1,562.4 715.8,618.2 722.5,642.1 729.2,602.2 735.9,594.3 742.6,658.1 749.3,570.4 756.0,570.4 762.7,634.2 769.4,578.3 776.1,650.1 782.8,562.4 789.5,578.3 796.2,602.2 802.9,682.0 809.6,618.2 816.3,729.9 823.0,777.7 829.7,777.7 836.4,777.7 843.2,777.7 849.9,777.7 856.6,777.7 863.3,777.7 870.0,777.7 876.7,777.7 883.4,777.7 890.1,777.7 896.8,777.7 903.5,777.7 910.2,777.7 916.9,777.7 923.6,777.7 930.3,777.7 937.0,777.7 943.7,777.7 950.4,777.7 957.1,777.7 963.8,777.7 970.5,777.7 977.2,777.7 983.9,777.7 990.6,777.7 997.3,777.7 1004.0,777.7 1010.8,777.7 1017.5,777.7 1024.2,777.7 1030.9,777.7 1037.6,777.7 1044.3,777.7 1051.0,777.7 1057.7,777.7 1064.4,777.7 1071.1,777.7 1077.8,777.7 1084.5,777.7 1091.2,777.7 1097.9,777.7 1104.6,777.7 1111.3,777.7 1118.0,777.7 1124.7,777.7 1131.4,777.7 1138.1,777.7 1144.8,777.7 1151.5,777.7 1158.2,777.7 1164.9,777.7 1171.6,777.7 1178.4,777.7 1185.1,777.7 1191.8,777.7 1198.5,777.7 1205.2,777.7 1211.9,777.7 1218.6,777.7 1225.3,777.7 1232.0,777.7 1238.7,777.7 1245.4,777.7 1252.1,777.7 1258.8,777.7 1265.5,777.7 1272.2,777.7 1278.9,777.7 1285.6,777.7 1292.3,777.7 1299.0,777.7 1305.7,777.7 1312.4,777.7 1319.1,777.7"/>
<g fill="#ee8176"><circle cx="239.8" cy="721.9" r="1.3"/><circle cx="246.5" cy="586.3" r="1.3"/><circle cx="253.2" cy="570.4" r="1.3"/><circle cx="259.9" cy="594.3" r="1.3"/><circle cx="266.6" cy="586.3" r="1.3"/><circle cx="273.3" cy="610.2" r="1.3"/><circle cx="280.0" cy="602.2" r="1.3"/><circle cx="286.7" cy="666.1" r="1.3"/><circle cx="293.4" cy="634.2" r="1.3"/><circle cx="300.1" cy="618.2" r="1.3"/><circle cx="306.8" cy="610.2" r="1.3"/><circle cx="313.5" cy="642.1" r="1.3"/><circle cx="320.2" cy="618.2" r="1.3"/><circle cx="326.9" cy="618.2" r="1.3"/><circle cx="333.6" cy="610.2" r="1.3"/><circle cx="340.4" cy="642.1" r="1.3"/><circle cx="347.1" cy="618.2" r="1.3"/><circle cx="353.8" cy="594.3" r="1.3"/><circle cx="360.5" cy="642.1" r="1.3"/><circle cx="367.2" cy="602.2" r="1.3"/><circle cx="373.9" cy="578.3" r="1.3"/><circle cx="380.6" cy="610.2" r="1.3"/><circle cx="387.3" cy="562.4" r="1.3"/><circle cx="394.0" cy="610.2" r="1.3"/><circle cx="400.7" cy="610.2" r="1.3"/><circle cx="407.4" cy="642.1" r="1.3"/><circle cx="414.1" cy="530.5" r="1.3"/><circle cx="420.8" cy="562.4" r="1.3"/><circle cx="427.5" cy="578.3" r="1.3"/><circle cx="434.2" cy="618.2" r="1.3"/><circle cx="440.9" cy="570.4" r="1.3"/><circle cx="447.6" cy="586.3" r="1.3"/><circle cx="454.3" cy="594.3" r="1.3"/><circle cx="461.0" cy="546.4" r="1.3"/><circle cx="467.7" cy="578.3" r="1.3"/><circle cx="474.4" cy="618.2" r="1.3"/><circle cx="481.1" cy="634.2" r="1.3"/><circle cx="487.8" cy="650.1" r="1.3"/><circle cx="494.5" cy="530.5" r="1.3"/><circle cx="501.2" cy="626.2" r="1.3"/><circle cx="508.0" cy="602.2" r="1.3"/><circle cx="514.7" cy="666.1" r="1.3"/><circle cx="521.4" cy="554.4" r="1.3"/><circle cx="528.1" cy="626.2" r="1.3"/><circle cx="534.8" cy="586.3" r="1.3"/><circle cx="541.5" cy="650.1" r="1.3"/><circle cx="548.2" cy="618.2" r="1.3"/><circle cx="554.9" cy="618.2" r="1.3"/><circle cx="561.6" cy="578.3" r="1.3"/><circle cx="568.3" cy="602.2" r="1.3"/><circle cx="575.0" cy="602.2" r="1.3"/><circle cx="581.7" cy="602.2" r="1.3"/><circle cx="588.4" cy="578.3" r="1.3"/><circle cx="595.1" cy="610.2" r="1.3"/><circle cx="601.8" cy="586.3" r="1.3"/><circle cx="608.5" cy="634.2" r="1.3"/><circle cx="615.2" cy="650.1" r="1.3"/><circle cx="621.9" cy="546.4" r="1.3"/><circle cx="628.6" cy="618.2" r="1.3"/><circle cx="635.3" cy="634.2" r="1.3"/><circle cx="642.0" cy="578.3" r="1.3"/><circle cx="648.7" cy="562.4" r="1.3"/><circle cx="655.4" cy="602.2" r="1.3"/><circle cx="662.1" cy="562.4" r="1.3"/><circle cx="668.8" cy="570.4" r="1.3"/><circle cx="675.6" cy="610.2" r="1.3"/><circle cx="682.3" cy="610.2" r="1.3"/><circle cx="689.0" cy="658.1" r="1.3"/><circle cx="695.7" cy="666.1" r="1.3"/><circle cx="702.4" cy="570.4" r="1.3"/><circle cx="709.1" cy="570.4" r="1.3"/><circle cx="715.8" cy="610.2" r="1.3"/><circle cx="722.5" cy="578.3" r="1.3"/><circle cx="729.2" cy="658.1" r="1.3"/><circle cx="735.9" cy="594.3" r="1.3"/><circle cx="742.6" cy="570.4" r="1.3"/><circle cx="749.3" cy="610.2" r="1.3"/><circle cx="756.0" cy="602.2" r="1.3"/><circle cx="762.7" cy="626.2" r="1.3"/><circle cx="769.4" cy="578.3" r="1.3"/><circle cx="776.1" cy="634.2" r="1.3"/><circle cx="782.8" cy="594.3" r="1.3"/><circle cx="789.5" cy="554.4" r="1.3"/><circle cx="796.2" cy="650.1" r="1.3"/><circle cx="802.9" cy="642.1" r="1.3"/><circle cx="809.6" cy="594.3" r="1.3"/><circle cx="816.3" cy="737.8" r="1.3"/><circle cx="823.0" cy="777.7" r="1.3"/><circle cx="829.7" cy="777.7" r="1.3"/><circle cx="836.4" cy="777.7" r="1.3"/><circle cx="843.2" cy="777.7" r="1.3"/><circle cx="849.9" cy="777.7" r="1.3"/><circle cx="856.6" cy="777.7" r="1.3"/><circle cx="863.3" cy="777.7" r="1.3"/><circle cx="870.0" cy="777.7" r="1.3"/><circle cx="876.7" cy="777.7" r="1.3"/><circle cx="883.4" cy="777.7" r="1.3"/><circle cx="890.1" cy="777.7" r="1.3"/><circle cx="896.8" cy="777.7" r="1.3"/><circle cx="903.5" cy="777.7" r="1.3"/><circle cx="910.2" cy="777.7" r="1.3"/><circle cx="916.9" cy="777.7" r="1.3"/><circle cx="923.6" cy="777.7" r="1.3"/><circle cx="930.3" cy="777.7" r="1.3"/><circle cx="937.0" cy="777.7" r="1.3"/><circle cx="943.7" cy="777.7" r="1.3"/><circle cx="950.4" cy="777.7" r="1.3"/><circle cx="957.1" cy="777.7" r="1.3"/><circle cx="963.8" cy="777.7" r="1.3"/><circle cx="970.5" cy="777.7" r="1.3"/><circle cx="977.2" cy="777.7" r="1.3"/><circle cx="983.9" cy="777.7" r="1.3"/><circle cx="990.6" cy="777.7" r="1.3"/><circle cx="997.3" cy="777.7" r="1.3"/><circle cx="1004.0" cy="777.7" r="1.3"/><circle cx="1010.8" cy="777.7" r="1.3"/><circle cx="1017.5" cy="777.7" r="1.3"/><circle cx="1024.2" cy="777.7" r="1.3"/><circle cx="1030.9" cy="777.7" r="1.3"/><circle cx="1037.6" cy="777.7" r="1.3"/><circle cx="1044.3" cy="777.7" r="1.3"/><circle cx="1051.0" cy="777.7" r="1.3"/><circle cx="1057.7" cy="777.7" r="1.3"/><circle cx="1064.4" cy="777.7" r="1.3"/><circle cx="1071.1" cy="777.7" r="1.3"/><circle cx="1077.8" cy="777.7" r="1.3"/><circle cx="1084.5" cy="777.7" r="1.3"/><circle cx="1091.2" cy="777.7" r="1.3"/><circle cx="1097.9" cy="777.7" r="1.3"/><circle cx="1104.6" cy="777.7" r="1.3"/><circle cx="1111.3" cy="777.7" r="1.3"/><circle cx="1118.0" cy="777.7" r="1.3"/><circle cx="1124.7" cy="777.7" r="1.3"/><circle cx="1131.4" cy="777.7" r="1.3"/><circle cx="1138.1" cy="777.7" r="1.3"/><circle cx="1144.8" cy="777.7" r="1.3"/><circle cx="1151.5" cy="777.7" r="1.3"/><circle cx="1158.2" cy="777.7" r="1.3"/><circle cx="1164.9" cy="777.7" r="1.3"/><circle cx="1171.6" cy="777.7" r="1.3"/><circle cx="1178.4" cy="777.7" r="1.3"/><circle cx="1185.1" cy="777.7" r="1.3"/><circle cx="1191.8" cy="777.7" r="1.3"/><circle cx="1198.5" cy="777.7" r="1.3"/><circle cx="1205.2" cy="777.7" r="1.3"/><circle cx="1211.9" cy="777.7" r="1.3"/><circle cx="1218.6" cy="777.7" r="1.3"/><circle cx="1225.3" cy="777.7" r="1.3"/><circle cx="1232.0" cy="777.7" r="1.3"/><circle cx="1238.7" cy="777.7" r="1.3"/><circle cx="1245.4" cy="777.7" r="1.3"/><circle cx="1252.1" cy="777.7" r="1.3"/><circle cx="1258.8" cy="777.7" r="1.3"/><circle cx="1265.5" cy="777.7" r="1.3"/><circle cx="1272.2" cy="777.7" r="1.3"/><circle cx="1278.9" cy="777.7" r="1.3"/><circle cx="1285.6" cy="777.7" r="1.3"/><circle cx="1292.3" cy="777.7" r="1.3"/><circle cx="1299.0" cy="777.7" r="1.3"/><circle cx="1305.7" cy="777.7" r="1.3"/><circle cx="1312.4" cy="777.7" r="1.3"/><circle cx="1319.1" cy="753.8" r="1.3"/></g>
<g fill="#70b6e5"><circle cx="239.8" cy="634.2" r="1.3"/><circle cx="246.5" cy="713.9" r="1.3"/><circle cx="253.2" cy="626.2" r="1.3"/><circle cx="259.9" cy="594.3" r="1.3"/><circle cx="266.6" cy="578.3" r="1.3"/><circle cx="273.3" cy="650.1" r="1.3"/><circle cx="280.0" cy="586.3" r="1.3"/><circle cx="286.7" cy="594.3" r="1.3"/><circle cx="293.4" cy="705.9" r="1.3"/><circle cx="300.1" cy="650.1" r="1.3"/><circle cx="306.8" cy="554.4" r="1.3"/><circle cx="313.5" cy="570.4" r="1.3"/><circle cx="320.2" cy="602.2" r="1.3"/><circle cx="326.9" cy="642.1" r="1.3"/><circle cx="333.6" cy="634.2" r="1.3"/><circle cx="340.4" cy="546.4" r="1.3"/><circle cx="347.1" cy="674.0" r="1.3"/><circle cx="353.8" cy="546.4" r="1.3"/><circle cx="360.5" cy="586.3" r="1.3"/><circle cx="367.2" cy="586.3" r="1.3"/><circle cx="373.9" cy="562.4" r="1.3"/><circle cx="380.6" cy="546.4" r="1.3"/><circle cx="387.3" cy="626.2" r="1.3"/><circle cx="394.0" cy="506.6" r="1.3"/><circle cx="400.7" cy="562.4" r="1.3"/><circle cx="407.4" cy="618.2" r="1.3"/><circle cx="414.1" cy="594.3" r="1.3"/><circle cx="420.8" cy="570.4" r="1.3"/><circle cx="427.5" cy="626.2" r="1.3"/><circle cx="434.2" cy="618.2" r="1.3"/><circle cx="440.9" cy="570.4" r="1.3"/><circle cx="447.6" cy="618.2" r="1.3"/><circle cx="454.3" cy="570.4" r="1.3"/><circle cx="461.0" cy="618.2" r="1.3"/><circle cx="467.7" cy="705.9" r="1.3"/><circle cx="474.4" cy="610.2" r="1.3"/><circle cx="481.1" cy="594.3" r="1.3"/><circle cx="487.8" cy="618.2" r="1.3"/><circle cx="494.5" cy="594.3" r="1.3"/><circle cx="501.2" cy="594.3" r="1.3"/><circle cx="508.0" cy="658.1" r="1.3"/><circle cx="514.7" cy="546.4" r="1.3"/><circle cx="521.4" cy="594.3" r="1.3"/><circle cx="528.1" cy="642.1" r="1.3"/><circle cx="534.8" cy="570.4" r="1.3"/><circle cx="541.5" cy="618.2" r="1.3"/><circle cx="548.2" cy="658.1" r="1.3"/><circle cx="554.9" cy="602.2" r="1.3"/><circle cx="561.6" cy="682.0" r="1.3"/><circle cx="568.3" cy="586.3" r="1.3"/><circle cx="575.0" cy="570.4" r="1.3"/><circle cx="581.7" cy="610.2" r="1.3"/><circle cx="588.4" cy="586.3" r="1.3"/><circle cx="595.1" cy="618.2" r="1.3"/><circle cx="601.8" cy="642.1" r="1.3"/><circle cx="608.5" cy="586.3" r="1.3"/><circle cx="615.2" cy="570.4" r="1.3"/><circle cx="621.9" cy="554.4" r="1.3"/><circle cx="628.6" cy="530.5" r="1.3"/><circle cx="635.3" cy="666.1" r="1.3"/><circle cx="642.0" cy="634.2" r="1.3"/><circle cx="648.7" cy="578.3" r="1.3"/><circle cx="655.4" cy="578.3" r="1.3"/><circle cx="662.1" cy="570.4" r="1.3"/><circle cx="668.8" cy="586.3" r="1.3"/><circle cx="675.6" cy="618.2" r="1.3"/><circle cx="682.3" cy="570.4" r="1.3"/><circle cx="689.0" cy="594.3" r="1.3"/><circle cx="695.7" cy="506.6" r="1.3"/><circle cx="702.4" cy="562.4" r="1.3"/><circle cx="709.1" cy="538.5" r="1.3"/><circle cx="715.8" cy="586.3" r="1.3"/><circle cx="722.5" cy="666.1" r="1.3"/><circle cx="729.2" cy="562.4" r="1.3"/><circle cx="735.9" cy="554.4" r="1.3"/><circle cx="742.6" cy="538.5" r="1.3"/><circle cx="749.3" cy="586.3" r="1.3"/><circle cx="756.0" cy="594.3" r="1.3"/><circle cx="762.7" cy="522.5" r="1.3"/><circle cx="769.4" cy="562.4" r="1.3"/><circle cx="776.1" cy="490.6" r="1.3"/><circle cx="782.8" cy="562.4" r="1.3"/><circle cx="789.5" cy="674.0" r="1.3"/><circle cx="796.2" cy="626.2" r="1.3"/><circle cx="802.9" cy="626.2" r="1.3"/><circle cx="809.6" cy="602.2" r="1.3"/><circle cx="816.3" cy="745.8" r="1.3"/><circle cx="823.0" cy="777.7" r="1.3"/><circle cx="829.7" cy="777.7" r="1.3"/><circle cx="836.4" cy="777.7" r="1.3"/><circle cx="843.2" cy="777.7" r="1.3"/><circle cx="849.9" cy="777.7" r="1.3"/><circle cx="856.6" cy="777.7" r="1.3"/><circle cx="863.3" cy="777.7" r="1.3"/><circle cx="870.0" cy="777.7" r="1.3"/><circle cx="876.7" cy="777.7" r="1.3"/><circle cx="883.4" cy="777.7" r="1.3"/><circle cx="890.1" cy="777.7" r="1.3"/><circle cx="896.8" cy="777.7" r="1.3"/><circle cx="903.5" cy="777.7" r="1.3"/><circle cx="910.2" cy="777.7" r="1.3"/><circle cx="916.9" cy="777.7" r="1.3"/><circle cx="923.6" cy="777.7" r="1.3"/><circle cx="930.3" cy="777.7" r="1.3"/><circle cx="937.0" cy="777.7" r="1.3"/><circle cx="943.7" cy="777.7" r="1.3"/><circle cx="950.4" cy="777.7" r="1.3"/><circle cx="957.1" cy="777.7" r="1.3"/><circle cx="963.8" cy="777.7" r="1.3"/><circle cx="970.5" cy="777.7" r="1.3"/><circle cx="977.2" cy="777.7" r="1.3"/><circle cx="983.9" cy="777.7" r="1.3"/><circle cx="990.6" cy="777.7" r="1.3"/><circle cx="997.3" cy="777.7" r="1.3"/><circle cx="1004.0" cy="777.7" r="1.3"/><circle cx="1010.8" cy="777.7" r="1.3"/><circle cx="1017.5" cy="777.7" r="1.3"/><circle cx="1024.2" cy="777.7" r="1.3"/><circle cx="1030.9" cy="777.7" r="1.3"/><circle cx="1037.6" cy="777.7" r="1.3"/><circle cx="1044.3" cy="777.7" r="1.3"/><circle cx="1051.0" cy="777.7" r="1.3"/><circle cx="1057.7" cy="777.7" r="1.3"/><circle cx="1064.4" cy="777.7" r="1.3"/><circle cx="1071.1" cy="777.7" r="1.3"/><circle cx="1077.8" cy="777.7" r="1.3"/><circle cx="1084.5" cy="777.7" r="1.3"/><circle cx="1091.2" cy="777.7" r="1.3"/><circle cx="1097.9" cy="777.7" r="1.3"/><circle cx="1104.6" cy="777.7" r="1.3"/><circle cx="1111.3" cy="777.7" r="1.3"/><circle cx="1118.0" cy="777.7" r="1.3"/><circle cx="1124.7" cy="777.7" r="1.3"/><circle cx="1131.4" cy="777.7" r="1.3"/><circle cx="1138.1" cy="777.7" r="1.3"/><circle cx="1144.8" cy="777.7" r="1.3"/><circle cx="1151.5" cy="777.7" r="1.3"/><circle cx="1158.2" cy="777.7" r="1.3"/><circle cx="1164.9" cy="777.7" r="1.3"/><circle cx="1171.6" cy="777.7" r="1.3"/><circle cx="1178.4" cy="777.7" r="1.3"/><circle cx="1185.1" cy="777.7" r="1.3"/><circle cx="1191.8" cy="777.7" r="1.3"/><circle cx="1198.5" cy="777.7" r="1.3"/><circle cx="1205.2" cy="777.7" r="1.3"/><circle cx="1211.9" cy="777.7" r="1.3"/><circle cx="1218.6" cy="777.7" r="1.3"/><circle cx="1225.3" cy="777.7" r="1.3"/><circle cx="1232.0" cy="777.7" r="1.3"/><circle cx="1238.7" cy="777.7" r="1.3"/><circle cx="1245.4" cy="777.7" r="1.3"/><circle cx="1252.1" cy="777.7" r="1.3"/><circle cx="1258.8" cy="777.7" r="1.3"/><circle cx="1265.5" cy="777.7" r="1.3"/><circle cx="1272.2" cy="777.7" r="1.3"/><circle cx="1278.9" cy="777.7" r="1.3"/><circle cx="1285.6" cy="777.7" r="1.3"/><circle cx="1292.3" cy="777.7" r="1.3"/><circle cx="1299.0" cy="777.7" r="1.3"/><circle cx="1305.7" cy="777.7" r="1.3"/><circle cx="1312.4" cy="777.7" r="1.3"/><circle cx="1319.1" cy="769.7" r="1.3"/></g>
<g fill="#f6b959"><circle cx="239.8" cy="705.9" r="1.3"/><circle cx="246.5" cy="626.2" r="1.3"/><circle cx="253.2" cy="562.4" r="1.3"/><circle cx="259.9" cy="602.2" r="1.3"/><circle cx="266.6" cy="538.5" r="1.3"/><circle cx="273.3" cy="602.2" r="1.3"/><circle cx="280.0" cy="562.4" r="1.3"/><circle cx="286.7" cy="626.2" r="1.3"/><circle cx="293.4" cy="634.2" r="1.3"/><circle cx="300.1" cy="610.2" r="1.3"/><circle cx="306.8" cy="578.3" r="1.3"/><circle cx="313.5" cy="554.4" r="1.3"/><circle cx="320.2" cy="642.1" r="1.3"/><circle cx="326.9" cy="578.3" r="1.3"/><circle cx="333.6" cy="674.0" r="1.3"/><circle cx="340.4" cy="610.2" r="1.3"/><circle cx="347.1" cy="626.2" r="1.3"/><circle cx="353.8" cy="618.2" r="1.3"/><circle cx="360.5" cy="594.3" r="1.3"/><circle cx="367.2" cy="506.6" r="1.3"/><circle cx="373.9" cy="626.2" r="1.3"/><circle cx="380.6" cy="570.4" r="1.3"/><circle cx="387.3" cy="642.1" r="1.3"/><circle cx="394.0" cy="610.2" r="1.3"/><circle cx="400.7" cy="546.4" r="1.3"/><circle cx="407.4" cy="546.4" r="1.3"/><circle cx="414.1" cy="562.4" r="1.3"/><circle cx="420.8" cy="626.2" r="1.3"/><circle cx="427.5" cy="578.3" r="1.3"/><circle cx="434.2" cy="530.5" r="1.3"/><circle cx="440.9" cy="618.2" r="1.3"/><circle cx="447.6" cy="586.3" r="1.3"/><circle cx="454.3" cy="650.1" r="1.3"/><circle cx="461.0" cy="626.2" r="1.3"/><circle cx="467.7" cy="602.2" r="1.3"/><circle cx="474.4" cy="570.4" r="1.3"/><circle cx="481.1" cy="650.1" r="1.3"/><circle cx="487.8" cy="610.2" r="1.3"/><circle cx="494.5" cy="642.1" r="1.3"/><circle cx="501.2" cy="626.2" r="1.3"/><circle cx="508.0" cy="698.0" r="1.3"/><circle cx="514.7" cy="570.4" r="1.3"/><circle cx="521.4" cy="570.4" r="1.3"/><circle cx="528.1" cy="602.2" r="1.3"/><circle cx="534.8" cy="602.2" r="1.3"/><circle cx="541.5" cy="642.1" r="1.3"/><circle cx="548.2" cy="642.1" r="1.3"/><circle cx="554.9" cy="578.3" r="1.3"/><circle cx="561.6" cy="586.3" r="1.3"/><circle cx="568.3" cy="602.2" r="1.3"/><circle cx="575.0" cy="698.0" r="1.3"/><circle cx="581.7" cy="650.1" r="1.3"/><circle cx="588.4" cy="594.3" r="1.3"/><circle cx="595.1" cy="610.2" r="1.3"/><circle cx="601.8" cy="610.2" r="1.3"/><circle cx="608.5" cy="602.2" r="1.3"/><circle cx="615.2" cy="578.3" r="1.3"/><circle cx="621.9" cy="586.3" r="1.3"/><circle cx="628.6" cy="602.2" r="1.3"/><circle cx="635.3" cy="610.2" r="1.3"/><circle cx="642.0" cy="626.2" r="1.3"/><circle cx="648.7" cy="554.4" r="1.3"/><circle cx="655.4" cy="602.2" r="1.3"/><circle cx="662.1" cy="698.0" r="1.3"/><circle cx="668.8" cy="594.3" r="1.3"/><circle cx="675.6" cy="490.6" r="1.3"/><circle cx="682.3" cy="642.1" r="1.3"/><circle cx="689.0" cy="578.3" r="1.3"/><circle cx="695.7" cy="602.2" r="1.3"/><circle cx="702.4" cy="554.4" r="1.3"/><circle cx="709.1" cy="634.2" r="1.3"/><circle cx="715.8" cy="666.1" r="1.3"/><circle cx="722.5" cy="602.2" r="1.3"/><circle cx="729.2" cy="602.2" r="1.3"/><circle cx="735.9" cy="634.2" r="1.3"/><circle cx="742.6" cy="618.2" r="1.3"/><circle cx="749.3" cy="570.4" r="1.3"/><circle cx="756.0" cy="618.2" r="1.3"/><circle cx="762.7" cy="682.0" r="1.3"/><circle cx="769.4" cy="626.2" r="1.3"/><circle cx="776.1" cy="618.2" r="1.3"/><circle cx="782.8" cy="586.3" r="1.3"/><circle cx="789.5" cy="594.3" r="1.3"/><circle cx="796.2" cy="578.3" r="1.3"/><circle cx="802.9" cy="610.2" r="1.3"/><circle cx="809.6" cy="586.3" r="1.3"/><circle cx="816.3" cy="745.8" r="1.3"/><circle cx="823.0" cy="777.7" r="1.3"/><circle cx="829.7" cy="777.7" r="1.3"/><circle cx="836.4" cy="777.7" r="1.3"/><circle cx="843.2" cy="777.7" r="1.3"/><circle cx="849.9" cy="777.7" r="1.3"/><circle cx="856.6" cy="777.7" r="1.3"/><circle cx="863.3" cy="777.7" r="1.3"/><circle cx="870.0" cy="777.7" r="1.3"/><circle cx="876.7" cy="777.7" r="1.3"/><circle cx="883.4" cy="777.7" r="1.3"/><circle cx="890.1" cy="777.7" r="1.3"/><circle cx="896.8" cy="777.7" r="1.3"/><circle cx="903.5" cy="777.7" r="1.3"/><circle cx="910.2" cy="777.7" r="1.3"/><circle cx="916.9" cy="777.7" r="1.3"/><circle cx="923.6" cy="777.7" r="1.3"/><circle cx="930.3" cy="777.7" r="1.3"/><circle cx="937.0" cy="777.7" r="1.3"/><circle cx="943.7" cy="777.7" r="1.3"/><circle cx="950.4" cy="777.7" r="1.3"/><circle cx="957.1" cy="777.7" r="1.3"/><circle cx="963.8" cy="777.7" r="1.3"/><circle cx="970.5" cy="777.7" r="1.3"/><circle cx="977.2" cy="777.7" r="1.3"/><circle cx="983.9" cy="777.7" r="1.3"/><circle cx="990.6" cy="777.7" r="1.3"/><circle cx="997.3" cy="777.7" r="1.3"/><circle cx="1004.0" cy="777.7" r="1.3"/><circle cx="1010.8" cy="777.7" r="1.3"/><circle cx="1017.5" cy="777.7" r="1.3"/><circle cx="1024.2" cy="777.7" r="1.3"/><circle cx="1030.9" cy="777.7" r="1.3"/><circle cx="1037.6" cy="777.7" r="1.3"/><circle cx="1044.3" cy="777.7" r="1.3"/><circle cx="1051.0" cy="777.7" r="1.3"/><circle cx="1057.7" cy="777.7" r="1.3"/><circle cx="1064.4" cy="777.7" r="1.3"/><circle cx="1071.1" cy="777.7" r="1.3"/><circle cx="1077.8" cy="777.7" r="1.3"/><circle cx="1084.5" cy="777.7" r="1.3"/><circle cx="1091.2" cy="777.7" r="1.3"/><circle cx="1097.9" cy="777.7" r="1.3"/><circle cx="1104.6" cy="777.7" r="1.3"/><circle cx="1111.3" cy="777.7" r="1.3"/><circle cx="1118.0" cy="777.7" r="1.3"/><circle cx="1124.7" cy="777.7" r="1.3"/><circle cx="1131.4" cy="777.7" r="1.3"/><circle cx="1138.1" cy="777.7" r="1.3"/><circle cx="1144.8" cy="777.7" r="1.3"/><circle cx="1151.5" cy="777.7" r="1.3"/><circle cx="1158.2" cy="777.7" r="1.3"/><circle cx="1164.9" cy="777.7" r="1.3"/><circle cx="1171.6" cy="777.7" r="1.3"/><circle cx="1178.4" cy="777.7" r="1.3"/><circle cx="1185.1" cy="777.7" r="1.3"/><circle cx="1191.8" cy="777.7" r="1.3"/><circle cx="1198.5" cy="777.7" r="1.3"/><circle cx="1205.2" cy="777.7" r="1.3"/><circle cx="1211.9" cy="777.7" r="1.3"/><circle cx="1218.6" cy="777.7" r="1.3"/><circle cx="1225.3" cy="777.7" r="1.3"/><circle cx="1232.0" cy="777.7" r="1.3"/><circle cx="1238.7" cy="777.7" r="1.3"/><circle cx="1245.4" cy="777.7" r="1.3"/><circle cx="1252.1" cy="777.7" r="1.3"/><circle cx="1258.8" cy="777.7" r="1.3"/><circle cx="1265.5" cy="777.7" r="1.3"/><circle cx="1272.2" cy="777.7" r="1.3"/><circle cx="1278.9" cy="777.7" r="1.3"/><circle cx="1285.6" cy="777.7" r="1.3"/><circle cx="1292.3" cy="777.7" r="1.3"/><circle cx="1299.0" cy="777.7" r="1.3"/><circle cx="1305.7" cy="777.7" r="1.3"/><circle cx="1312.4" cy="777.7" r="1.3"/><circle cx="1319.1" cy="777.7" r="1.3"/></g>
<g fill="#6cdb9b"><circle cx="239.8" cy="698.0" r="1.3"/><circle cx="246.5" cy="658.1" r="1.3"/><circle cx="253.2" cy="602.2" r="1.3"/><circle cx="259.9" cy="610.2" r="1.3"/><circle cx="266.6" cy="602.2" r="1.3"/><circle cx="273.3" cy="610.2" r="1.3"/><circle cx="280.0" cy="626.2" r="1.3"/><circle cx="286.7" cy="586.3" r="1.3"/><circle cx="293.4" cy="618.2" r="1.3"/><circle cx="300.1" cy="626.2" r="1.3"/><circle cx="306.8" cy="610.2" r="1.3"/><circle cx="313.5" cy="666.1" r="1.3"/><circle cx="320.2" cy="634.2" r="1.3"/><circle cx="326.9" cy="594.3" r="1.3"/><circle cx="333.6" cy="626.2" r="1.3"/><circle cx="340.4" cy="610.2" r="1.3"/><circle cx="347.1" cy="618.2" r="1.3"/><circle cx="353.8" cy="570.4" r="1.3"/><circle cx="360.5" cy="530.5" r="1.3"/><circle cx="367.2" cy="594.3" r="1.3"/><circle cx="373.9" cy="594.3" r="1.3"/><circle cx="380.6" cy="570.4" r="1.3"/><circle cx="387.3" cy="626.2" r="1.3"/><circle cx="394.0" cy="618.2" r="1.3"/><circle cx="400.7" cy="586.3" r="1.3"/><circle cx="407.4" cy="666.1" r="1.3"/><circle cx="414.1" cy="642.1" r="1.3"/><circle cx="420.8" cy="562.4" r="1.3"/><circle cx="427.5" cy="562.4" r="1.3"/><circle cx="434.2" cy="690.0" r="1.3"/><circle cx="440.9" cy="594.3" r="1.3"/><circle cx="447.6" cy="666.1" r="1.3"/><circle cx="454.3" cy="522.5" r="1.3"/><circle cx="461.0" cy="562.4" r="1.3"/><circle cx="467.7" cy="642.1" r="1.3"/><circle cx="474.4" cy="594.3" r="1.3"/><circle cx="481.1" cy="546.4" r="1.3"/><circle cx="487.8" cy="522.5" r="1.3"/><circle cx="494.5" cy="618.2" r="1.3"/><circle cx="501.2" cy="666.1" r="1.3"/><circle cx="508.0" cy="602.2" r="1.3"/><circle cx="514.7" cy="602.2" r="1.3"/><circle cx="521.4" cy="546.4" r="1.3"/><circle cx="528.1" cy="586.3" r="1.3"/><circle cx="534.8" cy="634.2" r="1.3"/><circle cx="541.5" cy="610.2" r="1.3"/><circle cx="548.2" cy="626.2" r="1.3"/><circle cx="554.9" cy="514.5" r="1.3"/><circle cx="561.6" cy="602.2" r="1.3"/><circle cx="568.3" cy="602.2" r="1.3"/><circle cx="575.0" cy="602.2" r="1.3"/><circle cx="581.7" cy="570.4" r="1.3"/><circle cx="588.4" cy="705.9" r="1.3"/><circle cx="595.1" cy="610.2" r="1.3"/><circle cx="601.8" cy="554.4" r="1.3"/><circle cx="608.5" cy="594.3" r="1.3"/><circle cx="615.2" cy="602.2" r="1.3"/><circle cx="621.9" cy="546.4" r="1.3"/><circle cx="628.6" cy="570.4" r="1.3"/><circle cx="635.3" cy="594.3" r="1.3"/><circle cx="642.0" cy="578.3" r="1.3"/><circle cx="648.7" cy="538.5" r="1.3"/><circle cx="655.4" cy="570.4" r="1.3"/><circle cx="662.1" cy="506.6" r="1.3"/><circle cx="668.8" cy="594.3" r="1.3"/><circle cx="675.6" cy="578.3" r="1.3"/><circle cx="682.3" cy="562.4" r="1.3"/><circle cx="689.0" cy="610.2" r="1.3"/><circle cx="695.7" cy="642.1" r="1.3"/><circle cx="702.4" cy="570.4" r="1.3"/><circle cx="709.1" cy="618.2" r="1.3"/><circle cx="715.8" cy="586.3" r="1.3"/><circle cx="722.5" cy="586.3" r="1.3"/><circle cx="729.2" cy="594.3" r="1.3"/><circle cx="735.9" cy="554.4" r="1.3"/><circle cx="742.6" cy="642.1" r="1.3"/><circle cx="749.3" cy="610.2" r="1.3"/><circle cx="756.0" cy="578.3" r="1.3"/><circle cx="762.7" cy="546.4" r="1.3"/><circle cx="769.4" cy="586.3" r="1.3"/><circle cx="776.1" cy="642.1" r="1.3"/><circle cx="782.8" cy="578.3" r="1.3"/><circle cx="789.5" cy="562.4" r="1.3"/><circle cx="796.2" cy="634.2" r="1.3"/><circle cx="802.9" cy="594.3" r="1.3"/><circle cx="809.6" cy="634.2" r="1.3"/><circle cx="816.3" cy="745.8" r="1.3"/><circle cx="823.0" cy="777.7" r="1.3"/><circle cx="829.7" cy="777.7" r="1.3"/><circle cx="836.4" cy="777.7" r="1.3"/><circle cx="843.2" cy="777.7" r="1.3"/><circle cx="849.9" cy="777.7" r="1.3"/><circle cx="856.6" cy="777.7" r="1.3"/><circle cx="863.3" cy="777.7" r="1.3"/><circle cx="870.0" cy="777.7" r="1.3"/><circle cx="876.7" cy="777.7" r="1.3"/><circle cx="883.4" cy="777.7" r="1.3"/><circle cx="890.1" cy="777.7" r="1.3"/><circle cx="896.8" cy="777.7" r="1.3"/><circle cx="903.5" cy="777.7" r="1.3"/><circle cx="910.2" cy="777.7" r="1.3"/><circle cx="916.9" cy="777.7" r="1.3"/><circle cx="923.6" cy="777.7" r="1.3"/><circle cx="930.3" cy="777.7" r="1.3"/><circle cx="937.0" cy="777.7" r="1.3"/><circle cx="943.7" cy="777.7" r="1.3"/><circle cx="950.4" cy="777.7" r="1.3"/><circle cx="957.1" cy="777.7" r="1.3"/><circle cx="963.8" cy="777.7" r="1.3"/><circle cx="970.5" cy="777.7" r="1.3"/><circle cx="977.2" cy="777.7" r="1.3"/><circle cx="983.9" cy="777.7" r="1.3"/><circle cx="990.6" cy="777.7" r="1.3"/><circle cx="997.3" cy="777.7" r="1.3"/><circle cx="1004.0" cy="777.7" r="1.3"/><circle cx="1010.8" cy="777.7" r="1.3"/><circle cx="1017.5" cy="777.7" r="1.3"/><circle cx="1024.2" cy="777.7" r="1.3"/><circle cx="1030.9" cy="777.7" r="1.3"/><circle cx="1037.6" cy="777.7" r="1.3"/><circle cx="1044.3" cy="777.7" r="1.3"/><circle cx="1051.0" cy="777.7" r="1.3"/><circle cx="1057.7" cy="777.7" r="1.3"/><circle cx="1064.4" cy="777.7" r="1.3"/><circle cx="1071.1" cy="777.7" r="1.3"/><circle cx="1077.8" cy="777.7" r="1.3"/><circle cx="1084.5" cy="777.7" r="1.3"/><circle cx="1091.2" cy="777.7" r="1.3"/><circle cx="1097.9" cy="777.7" r="1.3"/><circle cx="1104.6" cy="777.7" r="1.3"/><circle cx="1111.3" cy="777.7" r="1.3"/><circle cx="1118.0" cy="777.7" r="1.3"/><circle cx="1124.7" cy="777.7" r="1.3"/><circle cx="1131.4" cy="777.7" r="1.3"/><circle cx="1138.1" cy="777.7" r="1.3"/><circle cx="1144.8" cy="777.7" r="1.3"/><circle cx="1151.5" cy="777.7" r="1.3"/><circle cx="1158.2" cy="777.7" r="1.3"/><circle cx="1164.9" cy="777.7" r="1.3"/><circle cx="1171.6" cy="777.7" r="1.3"/><circle cx="1178.4" cy="777.7" r="1.3"/><circle cx="1185.1" cy="777.7" r="1.3"/><circle cx="1191.8" cy="777.7" r="1.3"/><circle cx="1198.5" cy="777.7" r="1.3"/><circle cx="1205.2" cy="777.7" r="1.3"/><circle cx="1211.9" cy="777.7" r="1.3"/><circle cx="1218.6" cy="777.7" r="1.3"/><circle cx="1225.3" cy="777.7" r="1.3"/><circle cx="1232.0" cy="777.7" r="1.3"/><circle cx="1238.7" cy="777.7" r="1.3"/><circle cx="1245.4" cy="777.7" r="1.3"/><circle cx="1252.1" cy="777.7" r="1.3"/><circle cx="1258.8" cy="777.7" r="1.3"/><circle cx="1265.5" cy="777.7" r="1.3"/><circle cx="1272.2" cy="777.7" r="1.3"/><circle cx="1278.9" cy="777.7" r="1.3"/><circle cx="1285.6" cy="777.7" r="1.3"/><circle cx="1292.3" cy="777.7" r="1.3"/><circle cx="1299.0" cy="777.7" r="1.3"/><circle cx="1305.7" cy="777.7" r="1.3"/><circle cx="1312.4" cy="777.7" r="1.3"/><circle cx="1319.1" cy="777.7" r="1.3"/></g>
<g fill="#b98acb"><circle cx="239.8" cy="634.2" r="1.3"/><circle cx="246.5" cy="610.2" r="1.3"/><circle cx="253.2" cy="602.2" r="1.3"/><circle cx="259.9" cy="522.5" r="1.3"/><circle cx="266.6" cy="658.1" r="1.3"/><circle cx="273.3" cy="626.2" r="1.3"/><circle cx="280.0" cy="594.3" r="1.3"/><circle cx="286.7" cy="586.3" r="1.3"/><circle cx="293.4" cy="602.2" r="1.3"/><circle cx="300.1" cy="570.4" r="1.3"/><circle cx="306.8" cy="610.2" r="1.3"/><circle cx="313.5" cy="530.5" r="1.3"/><circle cx="320.2" cy="682.0" r="1.3"/><circle cx="326.9" cy="658.1" r="1.3"/><circle cx="333.6" cy="586.3" r="1.3"/><circle cx="340.4" cy="594.3" r="1.3"/><circle cx="347.1" cy="682.0" r="1.3"/><circle cx="353.8" cy="594.3" r="1.3"/><circle cx="360.5" cy="650.1" r="1.3"/><circle cx="367.2" cy="594.3" r="1.3"/><circle cx="373.9" cy="554.4" r="1.3"/><circle cx="380.6" cy="642.1" r="1.3"/><circle cx="387.3" cy="570.4" r="1.3"/><circle cx="394.0" cy="578.3" r="1.3"/><circle cx="400.7" cy="530.5" r="1.3"/><circle cx="407.4" cy="698.0" r="1.3"/><circle cx="414.1" cy="546.4" r="1.3"/><circle cx="420.8" cy="570.4" r="1.3"/><circle cx="427.5" cy="570.4" r="1.3"/><circle cx="434.2" cy="658.1" r="1.3"/><circle cx="440.9" cy="618.2" r="1.3"/><circle cx="447.6" cy="610.2" r="1.3"/><circle cx="454.3" cy="570.4" r="1.3"/><circle cx="461.0" cy="602.2" r="1.3"/><circle cx="467.7" cy="562.4" r="1.3"/><circle cx="474.4" cy="618.2" r="1.3"/><circle cx="481.1" cy="594.3" r="1.3"/><circle cx="487.8" cy="626.2" r="1.3"/><circle cx="494.5" cy="602.2" r="1.3"/><circle cx="501.2" cy="586.3" r="1.3"/><circle cx="508.0" cy="602.2" r="1.3"/><circle cx="514.7" cy="594.3" r="1.3"/><circle cx="521.4" cy="594.3" r="1.3"/><circle cx="528.1" cy="650.1" r="1.3"/><circle cx="534.8" cy="546.4" r="1.3"/><circle cx="541.5" cy="586.3" r="1.3"/><circle cx="548.2" cy="682.0" r="1.3"/><circle cx="554.9" cy="618.2" r="1.3"/><circle cx="561.6" cy="618.2" r="1.3"/><circle cx="568.3" cy="594.3" r="1.3"/><circle cx="575.0" cy="570.4" r="1.3"/><circle cx="581.7" cy="602.2" r="1.3"/><circle cx="588.4" cy="594.3" r="1.3"/><circle cx="595.1" cy="586.3" r="1.3"/><circle cx="601.8" cy="570.4" r="1.3"/><circle cx="608.5" cy="610.2" r="1.3"/><circle cx="615.2" cy="602.2" r="1.3"/><circle cx="621.9" cy="650.1" r="1.3"/><circle cx="628.6" cy="618.2" r="1.3"/><circle cx="635.3" cy="610.2" r="1.3"/><circle cx="642.0" cy="634.2" r="1.3"/><circle cx="648.7" cy="570.4" r="1.3"/><circle cx="655.4" cy="610.2" r="1.3"/><circle cx="662.1" cy="658.1" r="1.3"/><circle cx="668.8" cy="562.4" r="1.3"/><circle cx="675.6" cy="578.3" r="1.3"/><circle cx="682.3" cy="498.6" r="1.3"/><circle cx="689.0" cy="586.3" r="1.3"/><circle cx="695.7" cy="634.2" r="1.3"/><circle cx="702.4" cy="594.3" r="1.3"/><circle cx="709.1" cy="594.3" r="1.3"/><circle cx="715.8" cy="586.3" r="1.3"/><circle cx="722.5" cy="610.2" r="1.3"/><circle cx="729.2" cy="618.2" r="1.3"/><circle cx="735.9" cy="602.2" r="1.3"/><circle cx="742.6" cy="586.3" r="1.3"/><circle cx="749.3" cy="610.2" r="1.3"/><circle cx="756.0" cy="578.3" r="1.3"/><circle cx="762.7" cy="602.2" r="1.3"/><circle cx="769.4" cy="594.3" r="1.3"/><circle cx="776.1" cy="602.2" r="1.3"/><circle cx="782.8" cy="626.2" r="1.3"/><circle cx="789.5" cy="666.1" r="1.3"/><circle cx="796.2" cy="634.2" r="1.3"/><circle cx="802.9" cy="634.2" r="1.3"/><circle cx="809.6" cy="610.2" r="1.3"/><circle cx="816.3" cy="737.8" r="1.3"/><circle cx="823.0" cy="777.7" r="1.3"/><circle cx="829.7" cy="777.7" r="1.3"/><circle cx="836.4" cy="777.7" r="1.3"/><circle cx="843.2" cy="777.7" r="1.3"/><circle cx="849.9" cy="777.7" r="1.3"/><circle cx="856.6" cy="777.7" r="1.3"/><circle cx="863.3" cy="777.7" r="1.3"/><circle cx="870.0" cy="777.7" r="1.3"/><circle cx="876.7" cy="777.7" r="1.3"/><circle cx="883.4" cy="777.7" r="1.3"/><circle cx="890.1" cy="777.7" r="1.3"/><circle cx="896.8" cy="777.7" r="1.3"/><circle cx="903.5" cy="777.7" r="1.3"/><circle cx="910.2" cy="777.7" r="1.3"/><circle cx="916.9" cy="777.7" r="1.3"/><circle cx="923.6" cy="777.7" r="1.3"/><circle cx="930.3" cy="777.7" r="1.3"/><circle cx="937.0" cy="777.7" r="1.3"/><circle cx="943.7" cy="777.7" r="1.3"/><circle cx="950.4" cy="777.7" r="1.3"/><circle cx="957.1" cy="777.7" r="1.3"/><circle cx="963.8" cy="777.7" r="1.3"/><circle cx="970.5" cy="777.7" r="1.3"/><circle cx="977.2" cy="777.7" r="1.3"/><circle cx="983.9" cy="777.7" r="1.3"/><circle cx="990.6" cy="777.7" r="1.3"/><circle cx="997.3" cy="777.7" r="1.3"/><circle cx="1004.0" cy="777.7" r="1.3"/><circle cx="1010.8" cy="777.7" r="1.3"/><circle cx="1017.5" cy="777.7" r="1.3"/><circle cx="1024.2" cy="777.7" r="1.3"/><circle cx="1030.9" cy="777.7" r="1.3"/><circle cx="1037.6" cy="777.7" r="1.3"/><circle cx="1044.3" cy="777.7" r="1.3"/><circle cx="1051.0" cy="777.7" r="1.3"/><circle cx="1057.7" cy="777.7" r="1.3"/><circle cx="1064.4" cy="777.7" r="1.3"/><circle cx="1071.1" cy="777.7" r="1.3"/><circle cx="1077.8" cy="777.7" r="1.3"/><circle cx="1084.5" cy="777.7" r="1.3"/><circle cx="1091.2" cy="777.7" r="1.3"/><circle cx="1097.9" cy="777.7" r="1.3"/><circle cx="1104.6" cy="777.7" r="1.3"/><circle cx="1111.3" cy="777.7" r="1.3"/><circle cx="1118.0" cy="777.7" r="1.3"/><circle cx="1124.7" cy="777.7" r="1.3"/><circle cx="1131.4" cy="777.7" r="1.3"/><circle cx="1138.1" cy="777.7" r="1.3"/><circle cx="1144.8" cy="777.7" r="1.3"/><circle cx="1151.5" cy="777.7" r="1.3"/><circle cx="1158.2" cy="777.7" r="1.3"/><circle cx="1164.9" cy="777.7" r="1.3"/><circle cx="1171.6" cy="777.7" r="1.3"/><circle cx="1178.4" cy="777.7" r="1.3"/><circle cx="1185.1" cy="777.7" r="1.3"/><circle cx="1191.8" cy="777.7" r="1.3"/><circle cx="1198.5" cy="777.7" r="1.3"/><circle cx="1205.2" cy="777.7" r="1.3"/><circle cx="1211.9" cy="777.7" r="1.3"/><circle cx="1218.6" cy="777.7" r="1.3"/><circle cx="1225.3" cy="777.7" r="1.3"/><circle cx="1232.0" cy="777.7" r="1.3"/><circle cx="1238.7" cy="777.7" r="1.3"/><circle cx="1245.4" cy="777.7" r="1.3"/><circle cx="1252.1" cy="777.7" r="1.3"/><circle cx="1258.8" cy="777.7" r="1.3"/><circle cx="1265.5" cy="777.7" r="1.3"/><circle cx="1272.2" cy="777.7" r="1.3"/><circle cx="1278.9" cy="777.7" r="1.3"/><circle cx="1285.6" cy="777.7" r="1.3"/><circle cx="1292.3" cy="777.7" r="1.3"/><circle cx="1299.0" cy="777.7" r="1.3"/><circle cx="1305.7" cy="777.7" r="1.3"/><circle cx="1312.4" cy="777.7" r="1.3"/><circle cx="1319.1" cy="777.7" r="1.3"/></g>
<g fill="#5ed0b9"><circle cx="239.8" cy="721.9" r="1.3"/><circle cx="246.5" cy="546.4" r="1.3"/><circle cx="253.2" cy="570.4" r="1.3"/><circle cx="259.9" cy="530.5" r="1.3"/><circle cx="266.6" cy="618.2" r="1.3"/><circle cx="273.3" cy="626.2" r="1.3"/><circle cx="280.0" cy="562.4" r="1.3"/><circle cx="286.7" cy="650.1" r="1.3"/><circle cx="293.4" cy="602.2" r="1.3"/><circle cx="300.1" cy="562.4" r="1.3"/><circle cx="306.8" cy="602.2" r="1.3"/><circle cx="313.5" cy="594.3" r="1.3"/><circle cx="320.2" cy="650.1" r="1.3"/><circle cx="326.9" cy="586.3" r="1.3"/><circle cx="333.6" cy="634.2" r="1.3"/><circle cx="340.4" cy="634.2" r="1.3"/><circle cx="347.1" cy="602.2" r="1.3"/><circle cx="353.8" cy="586.3" r="1.3"/><circle cx="360.5" cy="650.1" r="1.3"/><circle cx="367.2" cy="642.1" r="1.3"/><circle cx="373.9" cy="586.3" r="1.3"/><circle cx="380.6" cy="594.3" r="1.3"/><circle cx="387.3" cy="586.3" r="1.3"/><circle cx="394.0" cy="586.3" r="1.3"/><circle cx="400.7" cy="578.3" r="1.3"/><circle cx="407.4" cy="658.1" r="1.3"/><circle cx="414.1" cy="586.3" r="1.3"/><circle cx="420.8" cy="530.5" r="1.3"/><circle cx="427.5" cy="618.2" r="1.3"/><circle cx="434.2" cy="554.4" r="1.3"/><circle cx="440.9" cy="602.2" r="1.3"/><circle cx="447.6" cy="506.6" r="1.3"/><circle cx="454.3" cy="618.2" r="1.3"/><circle cx="461.0" cy="618.2" r="1.3"/><circle cx="467.7" cy="642.1" r="1.3"/><circle cx="474.4" cy="570.4" r="1.3"/><circle cx="481.1" cy="642.1" r="1.3"/><circle cx="487.8" cy="554.4" r="1.3"/><circle cx="494.5" cy="530.5" r="1.3"/><circle cx="501.2" cy="578.3" r="1.3"/><circle cx="508.0" cy="658.1" r="1.3"/><circle cx="514.7" cy="610.2" r="1.3"/><circle cx="521.4" cy="666.1" r="1.3"/><circle cx="528.1" cy="618.2" r="1.3"/><circle cx="534.8" cy="626.2" r="1.3"/><circle cx="541.5" cy="578.3" r="1.3"/><circle cx="548.2" cy="578.3" r="1.3"/><circle cx="554.9" cy="586.3" r="1.3"/><circle cx="561.6" cy="610.2" r="1.3"/><circle cx="568.3" cy="562.4" r="1.3"/><circle cx="575.0" cy="546.4" r="1.3"/><circle cx="581.7" cy="658.1" r="1.3"/><circle cx="588.4" cy="602.2" r="1.3"/><circle cx="595.1" cy="626.2" r="1.3"/><circle cx="601.8" cy="674.0" r="1.3"/><circle cx="608.5" cy="586.3" r="1.3"/><circle cx="615.2" cy="594.3" r="1.3"/><circle cx="621.9" cy="602.2" r="1.3"/><circle cx="628.6" cy="618.2" r="1.3"/><circle cx="635.3" cy="578.3" r="1.3"/><circle cx="642.0" cy="586.3" r="1.3"/><circle cx="648.7" cy="554.4" r="1.3"/><circle cx="655.4" cy="578.3" r="1.3"/><circle cx="662.1" cy="610.2" r="1.3"/><circle cx="668.8" cy="650.1" r="1.3"/><circle cx="675.6" cy="658.1" r="1.3"/><circle cx="682.3" cy="602.2" r="1.3"/><circle cx="689.0" cy="594.3" r="1.3"/><circle cx="695.7" cy="634.2" r="1.3"/><circle cx="702.4" cy="554.4" r="1.3"/><circle cx="709.1" cy="602.2" r="1.3"/><circle cx="715.8" cy="578.3" r="1.3"/><circle cx="722.5" cy="602.2" r="1.3"/><circle cx="729.2" cy="546.4" r="1.3"/><circle cx="735.9" cy="586.3" r="1.3"/><circle cx="742.6" cy="554.4" r="1.3"/><circle cx="749.3" cy="594.3" r="1.3"/><circle cx="756.0" cy="618.2" r="1.3"/><circle cx="762.7" cy="530.5" r="1.3"/><circle cx="769.4" cy="578.3" r="1.3"/><circle cx="776.1" cy="530.5" r="1.3"/><circle cx="782.8" cy="594.3" r="1.3"/><circle cx="789.5" cy="602.2" r="1.3"/><circle cx="796.2" cy="642.1" r="1.3"/><circle cx="802.9" cy="602.2" r="1.3"/><circle cx="809.6" cy="586.3" r="1.3"/><circle cx="816.3" cy="729.9" r="1.3"/><circle cx="823.0" cy="777.7" r="1.3"/><circle cx="829.7" cy="777.7" r="1.3"/><circle cx="836.4" cy="777.7" r="1.3"/><circle cx="843.2" cy="777.7" r="1.3"/><circle cx="849.9" cy="777.7" r="1.3"/><circle cx="856.6" cy="777.7" r="1.3"/><circle cx="863.3" cy="777.7" r="1.3"/><circle cx="870.0" cy="777.7" r="1.3"/><circle cx="876.7" cy="777.7" r="1.3"/><circle cx="883.4" cy="777.7" r="1.3"/><circle cx="890.1" cy="777.7" r="1.3"/><circle cx="896.8" cy="777.7" r="1.3"/><circle cx="903.5" cy="777.7" r="1.3"/><circle cx="910.2" cy="777.7" r="1.3"/><circle cx="916.9" cy="777.7" r="1.3"/><circle cx="923.6" cy="777.7" r="1.3"/><circle cx="930.3" cy="777.7" r="1.3"/><circle cx="937.0" cy="777.7" r="1.3"/><circle cx="943.7" cy="777.7" r="1.3"/><circle cx="950.4" cy="777.7" r="1.3"/><circle cx="957.1" cy="777.7" r="1.3"/><circle cx="963.8" cy="777.7" r="1.3"/><circle cx="970.5" cy="777.7" r="1.3"/><circle cx="977.2" cy="777.7" r="1.3"/><circle cx="983.9" cy="777.7" r="1.3"/><circle cx="990.6" cy="777.7" r="1.3"/><circle cx="997.3" cy="777.7" r="1.3"/><circle cx="1004.0" cy="777.7" r="1.3"/><circle cx="1010.8" cy="777.7" r="1.3"/><circle cx="1017.5" cy="777.7" r="1.3"/><circle cx="1024.2" cy="777.7" r="1.3"/><circle cx="1030.9" cy="777.7" r="1.3"/><circle cx="1037.6" cy="777.7" r="1.3"/><circle cx="1044.3" cy="777.7" r="1.3"/><circle cx="1051.0" cy="777.7" r="1.3"/><circle cx="1057.7" cy="777.7" r="1.3"/><circle cx="1064.4" cy="777.7" r="1.3"/><circle cx="1071.1" cy="777.7" r="1.3"/><circle cx="1077.8" cy="777.7" r="1.3"/><circle cx="1084.5" cy="777.7" r="1.3"/><circle cx="1091.2" cy="777.7" r="1.3"/><circle cx="1097.9" cy="777.7" r="1.3"/><circle cx="1104.6" cy="777.7" r="1.3"/><circle cx="1111.3" cy="777.7" r="1.3"/><circle cx="1118.0" cy="777.7" r="1.3"/><circle cx="1124.7" cy="777.7" r="1.3"/><circle cx="1131.4" cy="777.7" r="1.3"/><circle cx="1138.1" cy="777.7" r="1.3"/><circle cx="1144.8" cy="777.7" r="1.3"/><circle cx="1151.5" cy="777.7" r="1.3"/><circle cx="1158.2" cy="777.7" r="1.3"/><circle cx="1164.9" cy="777.7" r="1.3"/><circle cx="1171.6" cy="777.7" r="1.3"/><circle cx="1178.4" cy="777.7" r="1.3"/><circle cx="1185.1" cy="777.7" r="1.3"/><circle cx="1191.8" cy="777.7" r="1.3"/><circle cx="1198.5" cy="777.7" r="1.3"/><circle cx="1205.2" cy="777.7" r="1.3"/><circle cx="1211.9" cy="777.7" r="1.3"/><circle cx="1218.6" cy="777.7" r="1.3"/><circle cx="1225.3" cy="777.7" r="1.3"/><circle cx="1232.0" cy="777.7" r="1.3"/><circle cx="1238.7" cy="777.7" r="1.3"/><circle cx="1245.4" cy="777.7" r="1.3"/><circle cx="1252.1" cy="777.7" r="1.3"/><circle cx="1258.8" cy="777.7" r="1.3"/><circle cx="1265.5" cy="777.7" r="1.3"/><circle cx="1272.2" cy="777.7" r="1.3"/><circle cx="1278.9" cy="777.7" r="1.3"/><circle cx="1285.6" cy="777.7" r="1.3"/><circle cx="1292.3" cy="777.7" r="1.3"/><circle cx="1299.0" cy="777.7" r="1.3"/><circle cx="1305.7" cy="777.7" r="1.3"/><circle cx="1312.4" cy="777.7" r="1.3"/><circle cx="1319.1" cy="777.7" r="1.3"/></g>
<g fill="#eda464"><circle cx="239.8" cy="698.0" r="1.3"/><circle cx="246.5" cy="546.4" r="1.3"/><circle cx="253.2" cy="650.1" r="1.3"/><circle cx="259.9" cy="530.5" r="1.3"/><circle cx="266.6" cy="634.2" r="1.3"/><circle cx="273.3" cy="562.4" r="1.3"/><circle cx="280.0" cy="530.5" r="1.3"/><circle cx="286.7" cy="554.4" r="1.3"/><circle cx="293.4" cy="530.5" r="1.3"/><circle cx="300.1" cy="626.2" r="1.3"/><circle cx="306.8" cy="618.2" r="1.3"/><circle cx="313.5" cy="530.5" r="1.3"/><circle cx="320.2" cy="610.2" r="1.3"/><circle cx="326.9" cy="546.4" r="1.3"/><circle cx="333.6" cy="602.2" r="1.3"/><circle cx="340.4" cy="546.4" r="1.3"/><circle cx="347.1" cy="490.6" r="1.3"/><circle cx="353.8" cy="546.4" r="1.3"/><circle cx="360.5" cy="482.6" r="1.3"/><circle cx="367.2" cy="634.2" r="1.3"/><circle cx="373.9" cy="682.0" r="1.3"/><circle cx="380.6" cy="554.4" r="1.3"/><circle cx="387.3" cy="610.2" r="1.3"/><circle cx="394.0" cy="594.3" r="1.3"/><circle cx="400.7" cy="658.1" r="1.3"/><circle cx="407.4" cy="594.3" r="1.3"/><circle cx="414.1" cy="594.3" r="1.3"/><circle cx="420.8" cy="602.2" r="1.3"/><circle cx="427.5" cy="618.2" r="1.3"/><circle cx="434.2" cy="618.2" r="1.3"/><circle cx="440.9" cy="594.3" r="1.3"/><circle cx="447.6" cy="610.2" r="1.3"/><circle cx="454.3" cy="570.4" r="1.3"/><circle cx="461.0" cy="586.3" r="1.3"/><circle cx="467.7" cy="602.2" r="1.3"/><circle cx="474.4" cy="594.3" r="1.3"/><circle cx="481.1" cy="650.1" r="1.3"/><circle cx="487.8" cy="554.4" r="1.3"/><circle cx="494.5" cy="666.1" r="1.3"/><circle cx="501.2" cy="626.2" r="1.3"/><circle cx="508.0" cy="602.2" r="1.3"/><circle cx="514.7" cy="546.4" r="1.3"/><circle cx="521.4" cy="618.2" r="1.3"/><circle cx="528.1" cy="570.4" r="1.3"/><circle cx="534.8" cy="586.3" r="1.3"/><circle cx="541.5" cy="554.4" r="1.3"/><circle cx="548.2" cy="682.0" r="1.3"/><circle cx="554.9" cy="650.1" r="1.3"/><circle cx="561.6" cy="602.2" r="1.3"/><circle cx="568.3" cy="578.3" r="1.3"/><circle cx="575.0" cy="610.2" r="1.3"/><circle cx="581.7" cy="594.3" r="1.3"/><circle cx="588.4" cy="642.1" r="1.3"/><circle cx="595.1" cy="578.3" r="1.3"/><circle cx="601.8" cy="578.3" r="1.3"/><circle cx="608.5" cy="554.4" r="1.3"/><circle cx="615.2" cy="634.2" r="1.3"/><circle cx="621.9" cy="618.2" r="1.3"/><circle cx="628.6" cy="578.3" r="1.3"/><circle cx="635.3" cy="554.4" r="1.3"/><circle cx="642.0" cy="506.6" r="1.3"/><circle cx="648.7" cy="562.4" r="1.3"/><circle cx="655.4" cy="562.4" r="1.3"/><circle cx="662.1" cy="554.4" r="1.3"/><circle cx="668.8" cy="586.3" r="1.3"/><circle cx="675.6" cy="642.1" r="1.3"/><circle cx="682.3" cy="586.3" r="1.3"/><circle cx="689.0" cy="610.2" r="1.3"/><circle cx="695.7" cy="626.2" r="1.3"/><circle cx="702.4" cy="634.2" r="1.3"/><circle cx="709.1" cy="642.1" r="1.3"/><circle cx="715.8" cy="594.3" r="1.3"/><circle cx="722.5" cy="666.1" r="1.3"/><circle cx="729.2" cy="546.4" r="1.3"/><circle cx="735.9" cy="610.2" r="1.3"/><circle cx="742.6" cy="594.3" r="1.3"/><circle cx="749.3" cy="514.5" r="1.3"/><circle cx="756.0" cy="578.3" r="1.3"/><circle cx="762.7" cy="602.2" r="1.3"/><circle cx="769.4" cy="586.3" r="1.3"/><circle cx="776.1" cy="586.3" r="1.3"/><circle cx="782.8" cy="602.2" r="1.3"/><circle cx="789.5" cy="586.3" r="1.3"/><circle cx="796.2" cy="626.2" r="1.3"/><circle cx="802.9" cy="626.2" r="1.3"/><circle cx="809.6" cy="626.2" r="1.3"/><circle cx="816.3" cy="737.8" r="1.3"/><circle cx="823.0" cy="777.7" r="1.3"/><circle cx="829.7" cy="777.7" r="1.3"/><circle cx="836.4" cy="777.7" r="1.3"/><circle cx="843.2" cy="777.7" r="1.3"/><circle cx="849.9" cy="777.7" r="1.3"/><circle cx="856.6" cy="777.7" r="1.3"/><circle cx="863.3" cy="777.7" r="1.3"/><circle cx="870.0" cy="777.7" r="1.3"/><circle cx="876.7" cy="777.7" r="1.3"/><circle cx="883.4" cy="777.7" r="1.3"/><circle cx="890.1" cy="777.7" r="1.3"/><circle cx="896.8" cy="777.7" r="1.3"/><circle cx="903.5" cy="777.7" r="1.3"/><circle cx="910.2" cy="777.7" r="1.3"/><circle cx="916.9" cy="777.7" r="1.3"/><circle cx="923.6" cy="777.7" r="1.3"/><circle cx="930.3" cy="777.7" r="1.3"/><circle cx="937.0" cy="777.7" r="1.3"/><circle cx="943.7" cy="777.7" r="1.3"/><circle cx="950.4" cy="777.7" r="1.3"/><circle cx="957.1" cy="777.7" r="1.3"/><circle cx="963.8" cy="777.7" r="1.3"/><circle cx="970.5" cy="777.7" r="1.3"/><circle cx="977.2" cy="777.7" r="1.3"/><circle cx="983.9" cy="777.7" r="1.3"/><circle cx="990.6" cy="777.7" r="1.3"/><circle cx="997.3" cy="777.7" r="1.3"/><circle cx="1004.0" cy="777.7" r="1.3"/><circle cx="1010.8" cy="777.7" r="1.3"/><circle cx="1017.5" cy="777.7" r="1.3"/><circle cx="1024.2" cy="777.7" r="1.3"/><circle cx="1030.9" cy="777.7" r="1.3"/><circle cx="1037.6" cy="777.7" r="1.3"/><circle cx="1044.3" cy="777.7" r="1.3"/><circle cx="1051.0" cy="777.7" r="1.3"/><circle cx="1057.7" cy="777.7" r="1.3"/><circle cx="1064.4" cy="777.7" r="1.3"/><circle cx="1071.1" cy="777.7" r="1.3"/><circle cx="1077.8" cy="777.7" r="1.3"/><circle cx="1084.5" cy="777.7" r="1.3"/><circle cx="1091.2" cy="777.7" r="1.3"/><circle cx="1097.9" cy="777.7" r="1.3"/><circle cx="1104.6" cy="777.7" r="1.3"/><circle cx="1111.3" cy="777.7" r="1.3"/><circle cx="1118.0" cy="777.7" r="1.3"/><circle cx="1124.7" cy="777.7" r="1.3"/><circle cx="1131.4" cy="777.7" r="1.3"/><circle cx="1138.1" cy="777.7" r="1.3"/><circle cx="1144.8" cy="777.7" r="1.3"/><circle cx="1151.5" cy="777.7" r="1.3"/><circle cx="1158.2" cy="777.7" r="1.3"/><circle cx="1164.9" cy="777.7" r="1.3"/><circle cx="1171.6" cy="777.7" r="1.3"/><circle cx="1178.4" cy="777.7" r="1.3"/><circle cx="1185.1" cy="777.7" r="1.3"/><circle cx="1191.8" cy="777.7" r="1.3"/><circle cx="1198.5" cy="777.7" r="1.3"/><circle cx="1205.2" cy="777.7" r="1.3"/><circle cx="1211.9" cy="777.7" r="1.3"/><circle cx="1218.6" cy="777.7" r="1.3"/><circle cx="1225.3" cy="777.7" r="1.3"/><circle cx="1232.0" cy="777.7" r="1.3"/><circle cx="1238.7" cy="777.7" r="1.3"/><circle cx="1245.4" cy="777.7" r="1.3"/><circle cx="1252.1" cy="777.7" r="1.3"/><circle cx="1258.8" cy="777.7" r="1.3"/><circle cx="1265.5" cy="777.7" r="1.3"/><circle cx="1272.2" cy="777.7" r="1.3"/><circle cx="1278.9" cy="777.7" r="1.3"/><circle cx="1285.6" cy="777.7" r="1.3"/><circle cx="1292.3" cy="777.7" r="1.3"/><circle cx="1299.0" cy="777.7" r="1.3"/><circle cx="1305.7" cy="777.7" r="1.3"/><circle cx="1312.4" cy="777.7" r="1.3"/><circle cx="1319.1" cy="777.7" r="1.3"/></g>
<g fill="#707f8e"><circle cx="239.8" cy="729.9" r="1.3"/><circle cx="246.5" cy="690.0" r="1.3"/><circle cx="253.2" cy="650.1" r="1.3"/><circle cx="259.9" cy="626.2" r="1.3"/><circle cx="266.6" cy="610.2" r="1.3"/><circle cx="273.3" cy="674.0" r="1.3"/><circle cx="280.0" cy="570.4" r="1.3"/><circle cx="286.7" cy="642.1" r="1.3"/><circle cx="293.4" cy="618.2" r="1.3"/><circle cx="300.1" cy="554.4" r="1.3"/><circle cx="306.8" cy="586.3" r="1.3"/><circle cx="313.5" cy="658.1" r="1.3"/><circle cx="320.2" cy="634.2" r="1.3"/><circle cx="326.9" cy="578.3" r="1.3"/><circle cx="333.6" cy="634.2" r="1.3"/><circle cx="340.4" cy="674.0" r="1.3"/><circle cx="347.1" cy="594.3" r="1.3"/><circle cx="353.8" cy="634.2" r="1.3"/><circle cx="360.5" cy="554.4" r="1.3"/><circle cx="367.2" cy="586.3" r="1.3"/><circle cx="373.9" cy="562.4" r="1.3"/><circle cx="380.6" cy="618.2" r="1.3"/><circle cx="387.3" cy="658.1" r="1.3"/><circle cx="394.0" cy="618.2" r="1.3"/><circle cx="400.7" cy="578.3" r="1.3"/><circle cx="407.4" cy="642.1" r="1.3"/><circle cx="414.1" cy="586.3" r="1.3"/><circle cx="420.8" cy="546.4" r="1.3"/><circle cx="427.5" cy="522.5" r="1.3"/><circle cx="434.2" cy="578.3" r="1.3"/><circle cx="440.9" cy="586.3" r="1.3"/><circle cx="447.6" cy="594.3" r="1.3"/><circle cx="454.3" cy="618.2" r="1.3"/><circle cx="461.0" cy="642.1" r="1.3"/><circle cx="467.7" cy="674.0" r="1.3"/><circle cx="474.4" cy="546.4" r="1.3"/><circle cx="481.1" cy="562.4" r="1.3"/><circle cx="487.8" cy="610.2" r="1.3"/><circle cx="494.5" cy="538.5" r="1.3"/><circle cx="501.2" cy="570.4" r="1.3"/><circle cx="508.0" cy="610.2" r="1.3"/><circle cx="514.7" cy="666.1" r="1.3"/><circle cx="521.4" cy="570.4" r="1.3"/><circle cx="528.1" cy="658.1" r="1.3"/><circle cx="534.8" cy="594.3" r="1.3"/><circle cx="541.5" cy="650.1" r="1.3"/><circle cx="548.2" cy="594.3" r="1.3"/><circle cx="554.9" cy="626.2" r="1.3"/><circle cx="561.6" cy="546.4" r="1.3"/><circle cx="568.3" cy="602.2" r="1.3"/><circle cx="575.0" cy="586.3" r="1.3"/><circle cx="581.7" cy="634.2" r="1.3"/><circle cx="588.4" cy="650.1" r="1.3"/><circle cx="595.1" cy="594.3" r="1.3"/><circle cx="601.8" cy="586.3" r="1.3"/><circle cx="608.5" cy="578.3" r="1.3"/><circle cx="615.2" cy="626.2" r="1.3"/><circle cx="621.9" cy="610.2" r="1.3"/><circle cx="628.6" cy="626.2" r="1.3"/><circle cx="635.3" cy="562.4" r="1.3"/><circle cx="642.0" cy="570.4" r="1.3"/><circle cx="648.7" cy="586.3" r="1.3"/><circle cx="655.4" cy="586.3" r="1.3"/><circle cx="662.1" cy="618.2" r="1.3"/><circle cx="668.8" cy="594.3" r="1.3"/><circle cx="675.6" cy="562.4" r="1.3"/><circle cx="682.3" cy="634.2" r="1.3"/><circle cx="689.0" cy="690.0" r="1.3"/><circle cx="695.7" cy="650.1" r="1.3"/><circle cx="702.4" cy="618.2" r="1.3"/><circle cx="709.1" cy="594.3" r="1.3"/><circle cx="715.8" cy="586.3" r="1.3"/><circle cx="722.5" cy="586.3" r="1.3"/><circle cx="729.2" cy="586.3" r="1.3"/><circle cx="735.9" cy="642.1" r="1.3"/><circle cx="742.6" cy="594.3" r="1.3"/><circle cx="749.3" cy="610.2" r="1.3"/><circle cx="756.0" cy="626.2" r="1.3"/><circle cx="762.7" cy="602.2" r="1.3"/><circle cx="769.4" cy="618.2" r="1.3"/><circle cx="776.1" cy="626.2" r="1.3"/><circle cx="782.8" cy="602.2" r="1.3"/><circle cx="789.5" cy="546.4" r="1.3"/><circle cx="796.2" cy="602.2" r="1.3"/><circle cx="802.9" cy="666.1" r="1.3"/><circle cx="809.6" cy="514.5" r="1.3"/><circle cx="816.3" cy="745.8" r="1.3"/><circle cx="823.0" cy="777.7" r="1.3"/><circle cx="829.7" cy="777.7" r="1.3"/><circle cx="836.4" cy="777.7" r="1.3"/><circle cx="843.2" cy="777.7" r="1.3"/><circle cx="849.9" cy="777.7" r="1.3"/><circle cx="856.6" cy="777.7" r="1.3"/><circle cx="863.3" cy="777.7" r="1.3"/><circle cx="870.0" cy="777.7" r="1.3"/><circle cx="876.7" cy="777.7" r="1.3"/><circle cx="883.4" cy="777.7" r="1.3"/><circle cx="890.1" cy="777.7" r="1.3"/><circle cx="896.8" cy="777.7" r="1.3"/><circle cx="903.5" cy="777.7" r="1.3"/><circle cx="910.2" cy="777.7" r="1.3"/><circle cx="916.9" cy="777.7" r="1.3"/><circle cx="923.6" cy="777.7" r="1.3"/><circle cx="930.3" cy="777.7" r="1.3"/><circle cx="937.0" cy="777.7" r="1.3"/><circle cx="943.7" cy="777.7" r="1.3"/><circle cx="950.4" cy="777.7" r="1.3"/><circle cx="957.1" cy="777.7" r="1.3"/><circle cx="963.8" cy="777.7" r="1.3"/><circle cx="970.5" cy="777.7" r="1.3"/><circle cx="977.2" cy="777.7" r="1.3"/><circle cx="983.9" cy="777.7" r="1.3"/><circle cx="990.6" cy="777.7" r="1.3"/><circle cx="997.3" cy="777.7" r="1.3"/><circle cx="1004.0" cy="777.7" r="1.3"/><circle cx="1010.8" cy="777.7" r="1.3"/><circle cx="1017.5" cy="777.7" r="1.3"/><circle cx="1024.2" cy="777.7" r="1.3"/><circle cx="1030.9" cy="777.7" r="1.3"/><circle cx="1037.6" cy="777.7" r="1.3"/><circle cx="1044.3" cy="777.7" r="1.3"/><circle cx="1051.0" cy="777.7" r="1.3"/><circle cx="1057.7" cy="777.7" r="1.3"/><circle cx="1064.4" cy="777.7" r="1.3"/><circle cx="1071.1" cy="777.7" r="1.3"/><circle cx="1077.8" cy="777.7" r="1.3"/><circle cx="1084.5" cy="777.7" r="1.3"/><circle cx="1091.2" cy="777.7" r="1.3"/><circle cx="1097.9" cy="777.7" r="1.3"/><circle cx="1104.6" cy="777.7" r="1.3"/><circle cx="1111.3" cy="777.7" r="1.3"/><circle cx="1118.0" cy="777.7" r="1.3"/><circle cx="1124.7" cy="777.7" r="1.3"/><circle cx="1131.4" cy="777.7" r="1.3"/><circle cx="1138.1" cy="777.7" r="1.3"/><circle cx="1144.8" cy="777.7" r="1.3"/><circle cx="1151.5" cy="777.7" r="1.3"/><circle cx="1158.2" cy="777.7" r="1.3"/><circle cx="1164.9" cy="777.7" r="1.3"/><circle cx="1171.6" cy="777.7" r="1.3"/><circle cx="1178.4" cy="777.7" r="1.3"/><circle cx="1185.1" cy="777.7" r="1.3"/><circle cx="1191.8" cy="777.7" r="1.3"/><circle cx="1198.5" cy="777.7" r="1.3"/><circle cx="1205.2" cy="777.7" r="1.3"/><circle cx="1211.9" cy="777.7" r="1.3"/><circle cx="1218.6" cy="777.7" r="1.3"/><circle cx="1225.3" cy="777.7" r="1.3"/><circle cx="1232.0" cy="777.7" r="1.3"/><circle cx="1238.7" cy="777.7" r="1.3"/><circle cx="1245.4" cy="777.7" r="1.3"/><circle cx="1252.1" cy="777.7" r="1.3"/><circle cx="1258.8" cy="777.7" r="1.3"/><circle cx="1265.5" cy="777.7" r="1.3"/><circle cx="1272.2" cy="777.7" r="1.3"/><circle cx="1278.9" cy="777.7" r="1.3"/><circle cx="1285.6" cy="777.7" r="1.3"/><circle cx="1292.3" cy="777.7" r="1.3"/><circle cx="1299.0" cy="777.7" r="1.3"/><circle cx="1305.7" cy="777.7" r="1.3"/><circle cx="1312.4" cy="777.7" r="1.3"/><circle cx="1319.1" cy="777.7" r="1.3"/></g>
<g fill="#5bbca9"><circle cx="239.8" cy="634.2" r="1.3"/><circle cx="246.5" cy="634.2" r="1.3"/><circle cx="253.2" cy="626.2" r="1.3"/><circle cx="259.9" cy="674.0" r="1.3"/><circle cx="266.6" cy="626.2" r="1.3"/><circle cx="273.3" cy="602.2" r="1.3"/><circle cx="280.0" cy="586.3" r="1.3"/><circle cx="286.7" cy="634.2" r="1.3"/><circle cx="293.4" cy="602.2" r="1.3"/><circle cx="300.1" cy="610.2" r="1.3"/><circle cx="306.8" cy="578.3" r="1.3"/><circle cx="313.5" cy="578.3" r="1.3"/><circle cx="320.2" cy="546.4" r="1.3"/><circle cx="326.9" cy="498.6" r="1.3"/><circle cx="333.6" cy="538.5" r="1.3"/><circle cx="340.4" cy="642.1" r="1.3"/><circle cx="347.1" cy="570.4" r="1.3"/><circle cx="353.8" cy="538.5" r="1.3"/><circle cx="360.5" cy="578.3" r="1.3"/><circle cx="367.2" cy="562.4" r="1.3"/><circle cx="373.9" cy="586.3" r="1.3"/><circle cx="380.6" cy="570.4" r="1.3"/><circle cx="387.3" cy="554.4" r="1.3"/><circle cx="394.0" cy="594.3" r="1.3"/><circle cx="400.7" cy="594.3" r="1.3"/><circle cx="407.4" cy="578.3" r="1.3"/><circle cx="414.1" cy="554.4" r="1.3"/><circle cx="420.8" cy="482.6" r="1.3"/><circle cx="427.5" cy="554.4" r="1.3"/><circle cx="434.2" cy="602.2" r="1.3"/><circle cx="440.9" cy="570.4" r="1.3"/><circle cx="447.6" cy="650.1" r="1.3"/><circle cx="454.3" cy="514.5" r="1.3"/><circle cx="461.0" cy="594.3" r="1.3"/><circle cx="467.7" cy="634.2" r="1.3"/><circle cx="474.4" cy="554.4" r="1.3"/><circle cx="481.1" cy="578.3" r="1.3"/><circle cx="487.8" cy="610.2" r="1.3"/><circle cx="494.5" cy="618.2" r="1.3"/><circle cx="501.2" cy="562.4" r="1.3"/><circle cx="508.0" cy="578.3" r="1.3"/><circle cx="514.7" cy="602.2" r="1.3"/><circle cx="521.4" cy="594.3" r="1.3"/><circle cx="528.1" cy="586.3" r="1.3"/><circle cx="534.8" cy="618.2" r="1.3"/><circle cx="541.5" cy="610.2" r="1.3"/><circle cx="548.2" cy="554.4" r="1.3"/><circle cx="554.9" cy="570.4" r="1.3"/><circle cx="561.6" cy="618.2" r="1.3"/><circle cx="568.3" cy="562.4" r="1.3"/><circle cx="575.0" cy="554.4" r="1.3"/><circle cx="581.7" cy="650.1" r="1.3"/><circle cx="588.4" cy="602.2" r="1.3"/><circle cx="595.1" cy="546.4" r="1.3"/><circle cx="601.8" cy="594.3" r="1.3"/><circle cx="608.5" cy="674.0" r="1.3"/><circle cx="615.2" cy="650.1" r="1.3"/><circle cx="621.9" cy="634.2" r="1.3"/><circle cx="628.6" cy="522.5" r="1.3"/><circle cx="635.3" cy="554.4" r="1.3"/><circle cx="642.0" cy="522.5" r="1.3"/><circle cx="648.7" cy="570.4" r="1.3"/><circle cx="655.4" cy="546.4" r="1.3"/><circle cx="662.1" cy="626.2" r="1.3"/><circle cx="668.8" cy="594.3" r="1.3"/><circle cx="675.6" cy="610.2" r="1.3"/><circle cx="682.3" cy="554.4" r="1.3"/><circle cx="689.0" cy="658.1" r="1.3"/><circle cx="695.7" cy="586.3" r="1.3"/><circle cx="702.4" cy="610.2" r="1.3"/><circle cx="709.1" cy="562.4" r="1.3"/><circle cx="715.8" cy="618.2" r="1.3"/><circle cx="722.5" cy="642.1" r="1.3"/><circle cx="729.2" cy="602.2" r="1.3"/><circle cx="735.9" cy="594.3" r="1.3"/><circle cx="742.6" cy="658.1" r="1.3"/><circle cx="749.3" cy="570.4" r="1.3"/><circle cx="756.0" cy="570.4" r="1.3"/><circle cx="762.7" cy="634.2" r="1.3"/><circle cx="769.4" cy="578.3" r="1.3"/><circle cx="776.1" cy="650.1" r="1.3"/><circle cx="782.8" cy="562.4" r="1.3"/><circle cx="789.5" cy="578.3" r="1.3"/><circle cx="796.2" cy="602.2" r="1.3"/><circle cx="802.9" cy="682.0" r="1.3"/><circle cx="809.6" cy="618.2" r="1.3"/><circle cx="816.3" cy="729.9" r="1.3"/><circle cx="823.0" cy="777.7" r="1.3"/><circle cx="829.7" cy="777.7" r="1.3"/><circle cx="836.4" cy="777.7" r="1.3"/><circle cx="843.2" cy="777.7" r="1.3"/><circle cx="849.9" cy="777.7" r="1.3"/><circle cx="856.6" cy="777.7" r="1.3"/><circle cx="863.3" cy="777.7" r="1.3"/><circle cx="870.0" cy="777.7" r="1.3"/><circle cx="876.7" cy="777.7" r="1.3"/><circle cx="883.4" cy="777.7" r="1.3"/><circle cx="890.1" cy="777.7" r="1.3"/><circle cx="896.8" cy="777.7" r="1.3"/><circle cx="903.5" cy="777.7" r="1.3"/><circle cx="910.2" cy="777.7" r="1.3"/><circle cx="916.9" cy="777.7" r="1.3"/><circle cx="923.6" cy="777.7" r="1.3"/><circle cx="930.3" cy="777.7" r="1.3"/><circle cx="937.0" cy="777.7" r="1.3"/><circle cx="943.7" cy="777.7" r="1.3"/><circle cx="950.4" cy="777.7" r="1.3"/><circle cx="957.1" cy="777.7" r="1.3"/><circle cx="963.8" cy="777.7" r="1.3"/><circle cx="970.5" cy="777.7" r="1.3"/><circle cx="977.2" cy="777.7" r="1.3"/><circle cx="983.9" cy="777.7" r="1.3"/><circle cx="990.6" cy="777.7" r="1.3"/><circle cx="997.3" cy="777.7" r="1.3"/><circle cx="1004.0" cy="777.7" r="1.3"/><circle cx="1010.8" cy="777.7" r="1.3"/><circle cx="1017.5" cy="777.7" r="1.3"/><circle cx="1024.2" cy="777.7" r="1.3"/><circle cx="1030.9" cy="777.7" r="1.3"/><circle cx="1037.6" cy="777.7" r="1.3"/><circle cx="1044.3" cy="777.7" r="1.3"/><circle cx="1051.0" cy="777.7" r="1.3"/><circle cx="1057.7" cy="777.7" r="1.3"/><circle cx="1064.4" cy="777.7" r="1.3"/><circle cx="1071.1" cy="777.7" r="1.3"/><circle cx="1077.8" cy="777.7" r="1.3"/><circle cx="1084.5" cy="777.7" r="1.3"/><circle cx="1091.2" cy="777.7" r="1.3"/><circle cx="1097.9" cy="777.7" r="1.3"/><circle cx="1104.6" cy="777.7" r="1.3"/><circle cx="1111.3" cy="777.7" r="1.3"/><circle cx="1118.0" cy="777.7" r="1.3"/><circle cx="1124.7" cy="777.7" r="1.3"/><circle cx="1131.4" cy="777.7" r="1.3"/><circle cx="1138.1" cy="777.7" r="1.3"/><circle cx="1144.8" cy="777.7" r="1.3"/><circle cx="1151.5" cy="777.7" r="1.3"/><circle cx="1158.2" cy="777.7" r="1.3"/><circle cx="1164.9" cy="777.7" r="1.3"/><circle cx="1171.6" cy="777.7" r="1.3"/><circle cx="1178.4" cy="777.7" r="1.3"/><circle cx="1185.1" cy="777.7" r="1.3"/><circle cx="1191.8" cy="777.7" r="1.3"/><circle cx="1198.5" cy="777.7" r="1.3"/><circle cx="1205.2" cy="777.7" r="1.3"/><circle cx="1211.9" cy="777.7" r="1.3"/><circle cx="1218.6" cy="777.7" r="1.3"/><circle cx="1225.3" cy="777.7" r="1.3"/><circle cx="1232.0" cy="777.7" r="1.3"/><circle cx="1238.7" cy="777.7" r="1.3"/><circle cx="1245.4" cy="777.7" r="1.3"/><circle cx="1252.1" cy="777.7" r="1.3"/><circle cx="1258.8" cy="777.7" r="1.3"/><circle cx="1265.5" cy="777.7" r="1.3"/><circle cx="1272.2" cy="777.7" r="1.3"/><circle cx="1278.9" cy="777.7" r="1.3"/><circle cx="1285.6" cy="777.7" r="1.3"/><circle cx="1292.3" cy="777.7" r="1.3"/><circle cx="1299.0" cy="777.7" r="1.3"/><circle cx="1305.7" cy="777.7" r="1.3"/><circle cx="1312.4" cy="777.7" r="1.3"/><circle cx="1319.1" cy="777.7" r="1.3"/></g>
<g fill="#c9cbcf" font-family="Liberation Sans, sans-serif" font-size="11"><text x="227" y="781.0" text-anchor="end">0</text><text x="227" y="741.1" text-anchor="end">5</text><text x="227" y="701.2" text-anchor="end">10</text><text x="227" y="661.4" text-anchor="end">15</text><text x="227" y="621.5" text-anchor="end">20</text><text x="227" y="581.6" text-anchor="end">25</text><text x="227" y="541.8" text-anchor="end">30</text><text x="227" y="501.9" text-anchor="end">35</text><text x="227" y="462.0" text-anchor="end">40</text><text x="253.2" y="800" text-anchor="middle">05.12.</text><text x="253.2" y="816" text-anchor="middle">00:00</text><text x="306.8" y="800" text-anchor="middle">08:00</text><text x="360.5" y="800" text-anchor="middle">16:00</text><text x="414.1" y="800" text-anchor="middle">06.12.</text><text x="414.1" y="816" text-anchor="middle">00:00</text><text x="467.7" y="800" text-anchor="middle">08:00</text><text x="521.4" y="800" text-anchor="middle">16:00</text><text x="575.0" y="800" text-anchor="middle">07.12.</text><text x="575.0" y="816" text-anchor="middle">00:00</text><text x="628.6" y="800" text-anchor="middle">08:00</text><text x="682.3" y="800" text-anchor="middle">16:00</text><text x="735.9" y="800" text-anchor="middle">08.12.</text><text x="735.9" y="816" text-anchor="middle">00:00</text><text x="789.5" y="800" text-anchor="middle">08:00</text><text x="843.2" y="800" text-anchor="middle">16:00</text><text x="896.8" y="800" text-anchor="middle">09.12.</text><text x="896.8" y="816" text-anchor="middle">00:00</text><text x="950.4" y="800" text-anchor="middle">08:00</text><text x="1004.0" y="800" text-anchor="middle">16:00</text><text x="1057.7" y="800" text-anchor="middle">10.12.</text><text x="1057.7" y="816" text-anchor="middle">00:00</text><text x="1111.3" y="800" text-anchor="middle">08:00</text><text x="1164.9" y="800" text-anchor="middle">16:00</text><text x="1218.6" y="800" text-anchor="middle">11.12.</text><text x="1218.6" y="816" text-anchor="middle">00:00</text><text x="1272.2" y="800" text-anchor="middle">08:00</text><text x="780" y="832" text-anchor="middle">Zeit</text><text x="0" y="0" text-anchor="middle" transform="translate(193,615) rotate(-90)">Reaktionen</text></g>
</svg>

<!-- legend -->
<div class="abs" style="left:168px;top:855px;width:1174px;height:50px;border-radius:5px;background:#202226"></div>
<div class="abs" style="left:292px;top:866px;width:110px;height:29px;border-radius:4px;background:#2e3035"></div>
<div class="abs" style="left:301px;top:872px;line-height:0"><svg width="16" height="16" viewBox="0 0 16 16"><rect x="0.5" y="6.5" width="3.2" height="8.5" rx="0.6" fill="#e74c3c"/><path d="M4.8 7.2L8.2 2.8Q8.8 1.2 9.6 1.2Q11.4 1.4 10.6 4.2L10.1 6H14Q15.6 6.1 15.4 7.6Q15.6 8.6 14.9 9.1Q15.5 10 14.6 10.8Q15 11.8 14 12.4Q14.4 14.9 12 15H6.6Q4.8 15 4.8 13.5Z" fill="#e74c3c"/></svg></div>
<div class="abs" style="left:321.3px;top:874px;font-size:12px;color:#c3c6cc;line-height:14px">fa-thumbs-up</div>
<div class="abs" style="left:413px;top:866px;width:125px;height:29px;border-radius:4px;background:#2e3035"></div>
<div class="abs" style="left:421px;top:872px;line-height:0"><svg width="16" height="16" viewBox="0 0 16 16"><g transform="translate(0,16) scale(1,-1)"><rect x="0.5" y="6.5" width="3.2" height="8.5" rx="0.6" fill="#3498db"/><path d="M4.8 7.2L8.2 2.8Q8.8 1.2 9.6 1.2Q11.4 1.4 10.6 4.2L10.1 6H14Q15.6 6.1 15.4 7.6Q15.6 8.6 14.9 9.1Q15.5 10 14.6 10.8Q15 11.8 14 12.4Q14.4 14.9 12 15H6.6Q4.8 15 4.8 13.5Z" fill="#3498db"/></g></svg></div>
<div class="abs" style="left:441.4px;top:874px;font-size:12px;color:#c3c6cc;line-height:14px">fa-thumbs-down</div>
<div class="abs" style="left:549px;top:866px;width:93px;height:29px;border-radius:4px;background:#2e3035"></div>
<div class="abs" style="left:557.5px;top:872px;line-height:0"><svg width="12" height="17" viewBox="0 0 12 17"><path d="M6 0.5A5.4 5.4 0 0 1 11.4 5.9Q11.4 8 9.8 9.8Q8.6 11.2 8.4 12.4H3.6Q3.4 11.2 2.2 9.8Q0.6 8 0.6 5.9A5.4 5.4 0 0 1 6 0.5Z" fill="#f39c12"/><rect x="3.6" y="13.2" width="4.8" height="1.8" rx="0.5" fill="#f39c12"/><path d="M4.2 15.6H7.8Q7.4 16.8 6 16.8Q4.6 16.8 4.2 15.6Z" fill="#f39c12"/></svg></div>
<div class="abs" style="left:574px;top:874px;font-size:12px;color:#c3c6cc;line-height:14px">fa-lightbulb</div>
<div class="abs" style="left:653px;top:866px;width:95px;height:29px;border-radius:4px;background:#2e3035"></div>
<div class="abs" style="left:661px;top:872px;line-height:0"><svg width="16" height="16" viewBox="0 0 16 16"><path d="M12.5 1.5Q14 1.5 14 3V13Q14 14.5 12.5 14.5L7.5 11.5H6L6.8 15H3.8L3 11.5Q1 11.3 1 9.5V6.5Q1 4.5 3 4.5H7.5Z" fill="#2ecc71"/><rect x="14.3" y="6" width="1.5" height="4" rx="0.7" fill="#2ecc71"/></svg></div>
<div class="abs" style="left:681.6px;top:874px;font-size:12px;color:#c3c6cc;line-height:14px">fa-bullhorn</div>
<div class="abs" style="left:758px;top:866px;width:96px;height:29px;border-radius:4px;background:#2e3035"></div>
<div class="abs" style="left:767px;top:872px;line-height:0"><svg width="16" height="16" viewBox="0 0 16 16"><circle cx="8" cy="8" r="7.5" fill="#9b59b6"/><circle cx="5.2" cy="6.2" r="1.1" fill="#2c2e33"/><circle cx="10.8" cy="6.2" r="1.1" fill="#2c2e33"/><path d="M5.5 11.8Q8 9.8 10.5 11.8" fill="none" stroke="#2c2e33" stroke-width="1.2"/><path d="M4.4 9.2Q3.4 10.6 4.4 11.2Q5.4 10.6 4.4 9.2Z" fill="#2c2e33"/></svg></div>
<div class="abs" style="left:787px;top:874px;font-size:12px;color:#c3c6cc;line-height:14px">fa-sad-tear</div>
<div class="abs" style="left:865px;top:866px;width:66px;height:29px;border-radius:4px;background:#2e3035"></div>
<div class="abs" style="left:873.5px;top:872px;line-height:0"><svg width="14" height="16" viewBox="0 0 14 16"><path d="M5 0.5Q5.5 3 3.5 5Q1 7.5 1 10Q1 15.5 7 15.5Q13 15.5 13 10Q13 6.5 10.5 3.8Q10 5.5 9 6Q8.5 2.5 5 0.5Z" fill="#1abc9c"/><path d="M7 13.5Q4.2 13.5 4.2 11Q4.2 9.5 5.5 8.2Q6 9.3 6.8 9.5Q7 8 8.5 7Q9.8 8.8 9.8 11Q9.8 13.5 7 13.5Z" fill="#2c2e33"/></svg></div>
<div class="abs" style="left:892px;top:874px;font-size:12px;color:#c3c6cc;line-height:14px">fa-fire</div>
<div class="abs" style="left:942px;top:866px;width:94px;height:29px;border-radius:4px;background:#2e3035"></div>
<div class="abs" style="left:951px;top:872px;line-height:0"><svg width="16" height="16" viewBox="0 0 16 16"><circle cx="8" cy="8" r="7.5" fill="#e67e22"/><circle cx="5.3" cy="6" r="1.1" fill="#2c2e33"/><circle cx="10.7" cy="6" r="1.1" fill="#2c2e33"/><ellipse cx="8" cy="10.8" rx="1.9" ry="2.2" fill="#2c2e33"/></svg></div>
<div class="abs" style="left:971px;top:874px;font-size:12px;color:#c3c6cc;line-height:14px">fa-surprise</div>
<div class="abs" style="left:1047px;top:866px;width:81px;height:29px;border-radius:4px;background:#2e3035"></div>
<div class="abs" style="left:1055.5px;top:872px;line-height:0"><svg width="16" height="16" viewBox="0 0 16 16"><circle cx="8" cy="8" r="7.5" fill="#34495e"/><path d="M4 6.8Q5.2 5 6.4 6.8M9.6 6.8Q10.8 5 12 6.8" fill="none" stroke="#2c2e33" stroke-width="1"/><path d="M3.8 9H12.2Q11.8 13 8 13Q4.2 13 3.8 9Z" fill="#2c2e33"/></svg></div>
<div class="abs" style="left:1075.8px;top:874px;font-size:12px;color:#c3c6cc;line-height:14px">fa-laugh</div>
<div class="abs" style="left:1138px;top:866px;width:79px;height:29px;border-radius:4px;background:#2e3035"></div>
<div class="abs" style="left:1147px;top:872px;line-height:0"><svg width="16" height="15" viewBox="0 0 16 15"><path d="M8 14.5L1.7 8.4Q-0.6 6 0.9 3Q2.6 0.2 5.6 0.9Q7 1.3 8 2.6Q9 1.3 10.4 0.9Q13.4 0.2 15.1 3Q16.6 6 14.3 8.4Z" fill="#16a085"/></svg></div>
<div class="abs" style="left:1167.3px;top:874px;font-size:12px;color:#c3c6cc;line-height:14px">fa-heart</div>

<!-- back button -->
<div class="abs" style="left:150px;top:945px;width:167px;height:36px;border-radius:5px;border:1px solid #3a3d45"></div>
<svg class="abs" style="left:162px;top:957px" width="13" height="12" viewBox="0 0 13 12"><path d="M12 6H2M6.5 1.2L1.5 6L6.5 10.8" fill="none" stroke="#e8eaee" stroke-width="1.7"/></svg>
<div class="abs" style="left:183px;top:956px;font-size:14px;font-weight:bold;color:#e2e4e8;line-height:16px">Zurück zum Event</div>
</body></html>
